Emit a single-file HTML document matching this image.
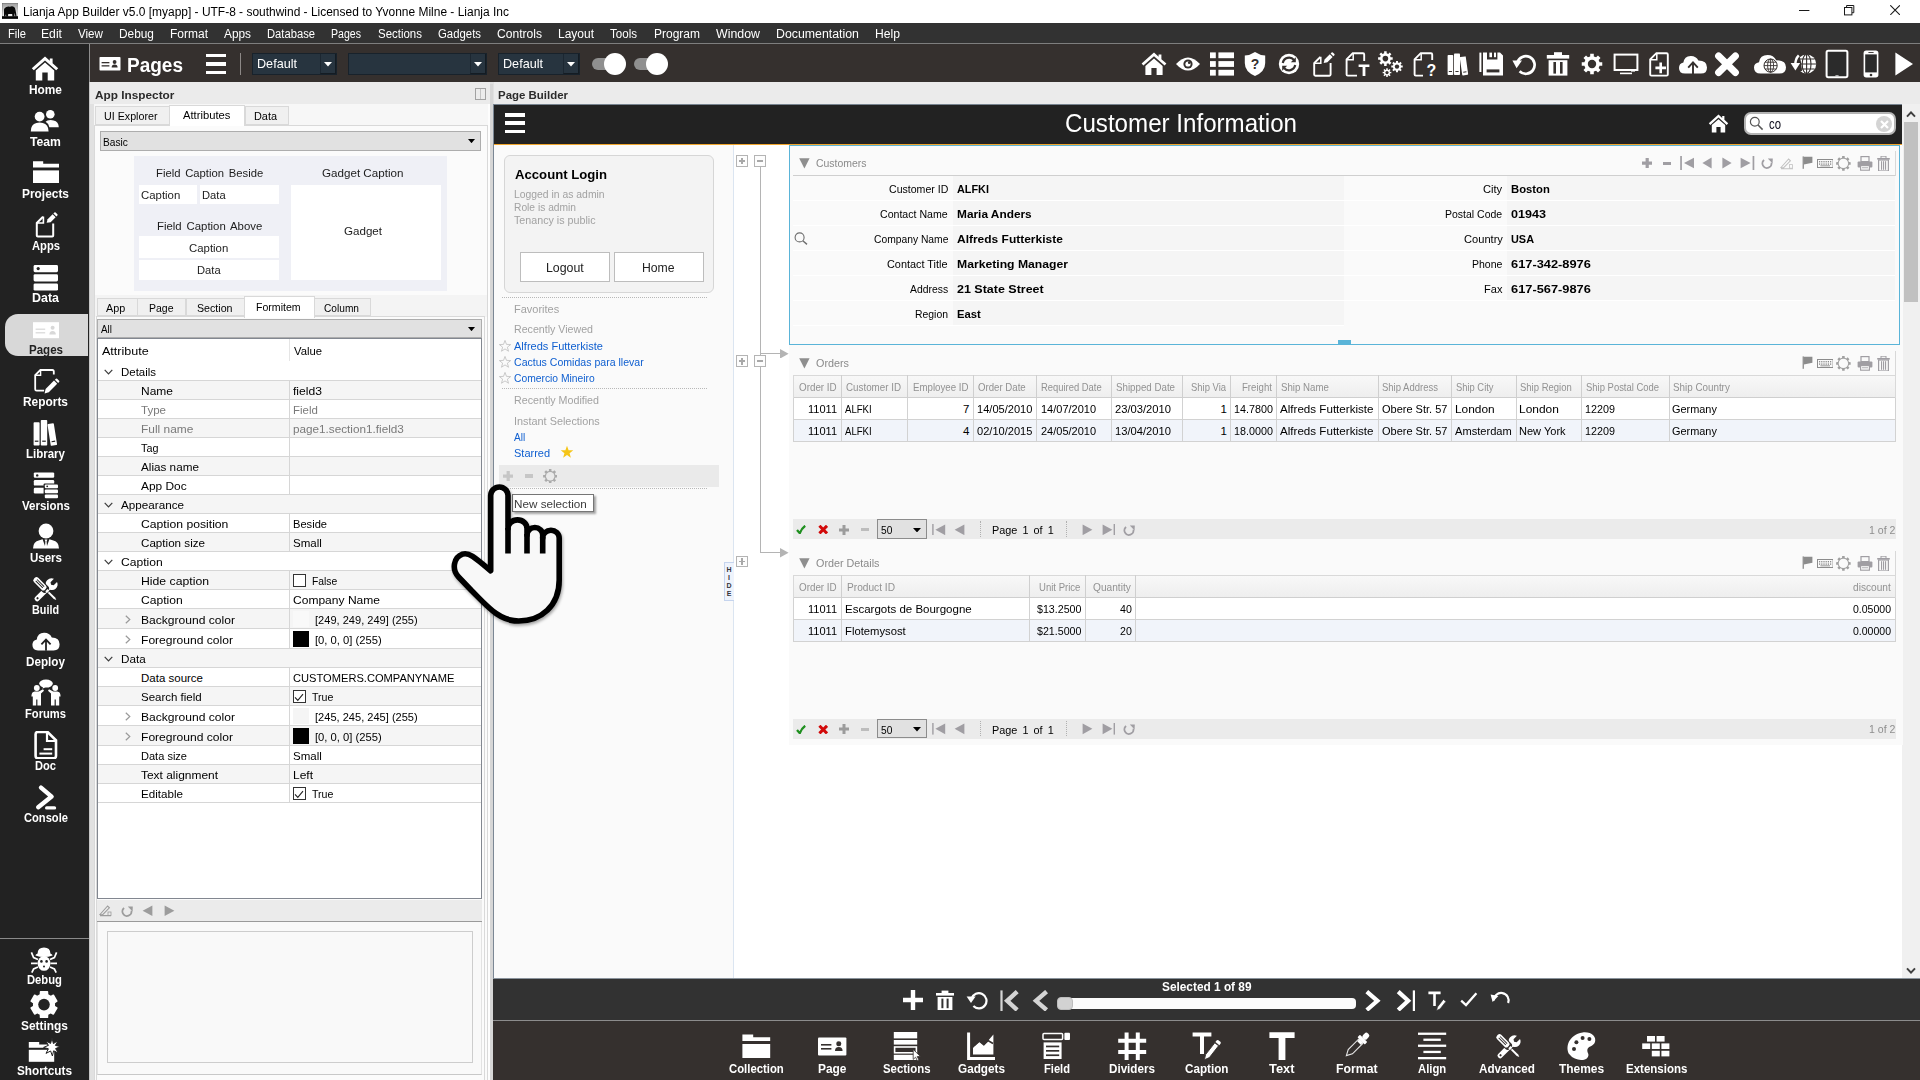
<!DOCTYPE html>
<html><head><meta charset="utf-8"><title>Lianja App Builder</title><style>
html,body{margin:0;padding:0;}
body{width:1920px;height:1080px;overflow:hidden;position:relative;background:#f0f0f0;font-family:"Liberation Sans",sans-serif;}
.t{position:absolute;white-space:nowrap;display:block;transform-origin:0 50%;}
.r{position:absolute;box-sizing:border-box;display:block;}
</style></head><body>
<div class="r" style="left:0px;top:0px;width:1920px;height:23px;background:#ffffff;"></div>
<span class="t" style="left:23.3px;top:3.8px;font-size:12.3px;line-height:16px;transform:scaleX(0.9729);color:#000;">Lianja App Builder v5.0 [myapp] - UTF-8 - southwind - Licensed to Yvonne Milne - Lianja Inc</span>
<div class="r" style="left:0px;top:23px;width:1920px;height:21px;background:#323232;"></div>
<div class="r" style="left:0px;top:43px;width:1920px;height:1.2px;background:#7e7e7e;"></div>
<span class="t" style="left:8.0px;top:26.1px;font-size:12.01px;line-height:16px;transform:scaleX(0.9302);color:#fff;">File</span>
<span class="t" style="left:41.0px;top:26.1px;font-size:12.01px;line-height:16px;transform:scaleX(1.0148);color:#fff;">Edit</span>
<span class="t" style="left:78.0px;top:26.1px;font-size:12.01px;line-height:16px;transform:scaleX(0.9685);color:#fff;">View</span>
<span class="t" style="left:119.0px;top:26.1px;font-size:12.01px;line-height:16px;transform:scaleX(0.9890);color:#fff;">Debug</span>
<span class="t" style="left:170.0px;top:26.1px;font-size:12.01px;line-height:16px;transform:scaleX(0.9992);color:#fff;">Format</span>
<span class="t" style="left:224.0px;top:26.1px;font-size:12.01px;line-height:16px;transform:scaleX(0.9864);color:#fff;">Apps</span>
<span class="t" style="left:267.0px;top:26.1px;font-size:12.01px;line-height:16px;transform:scaleX(0.9337);color:#fff;">Database</span>
<span class="t" style="left:331.0px;top:26.1px;font-size:12.01px;line-height:16px;transform:scaleX(0.8810);color:#fff;">Pages</span>
<span class="t" style="left:378.0px;top:26.1px;font-size:12.01px;line-height:16px;transform:scaleX(0.9552);color:#fff;">Sections</span>
<span class="t" style="left:438.0px;top:26.1px;font-size:12.01px;line-height:16px;transform:scaleX(0.9472);color:#fff;">Gadgets</span>
<span class="t" style="left:497.0px;top:26.1px;font-size:12.01px;line-height:16px;transform:scaleX(1.0063);color:#fff;">Controls</span>
<span class="t" style="left:558.0px;top:26.1px;font-size:12.01px;line-height:16px;transform:scaleX(0.9984);color:#fff;">Layout</span>
<span class="t" style="left:610.0px;top:26.1px;font-size:12.01px;line-height:16px;transform:scaleX(0.9631);color:#fff;">Tools</span>
<span class="t" style="left:654.0px;top:26.1px;font-size:12.01px;line-height:16px;transform:scaleX(0.9989);color:#fff;">Program</span>
<span class="t" style="left:716.0px;top:26.1px;font-size:12.01px;line-height:16px;transform:scaleX(1.0301);color:#fff;">Window</span>
<span class="t" style="left:776.0px;top:26.1px;font-size:12.01px;line-height:16px;transform:scaleX(1.0275);color:#fff;">Documentation</span>
<span class="t" style="left:875.0px;top:26.1px;font-size:12.01px;line-height:16px;transform:scaleX(1.0122);color:#fff;">Help</span>
<div class="r" style="left:0px;top:44px;width:89px;height:1036px;background:#222222;"></div>
<div class="r" style="left:89px;top:82px;width:1px;height:998px;background:#c6c6c6;"></div>
<div class="r" style="left:90px;top:44px;width:1830px;height:38px;background:#35302e;"></div>
<div class="r" style="left:89px;top:44.4px;width:1px;height:37.6px;background:#8e8e8e;"></div>
<div class="r" style="left:90px;top:82px;width:400px;height:998px;background:#f0f0f0;"></div>
<div class="r" style="left:490px;top:82px;width:4px;height:998px;background:#e0e0e0;"></div>
<div class="r" style="left:494px;top:82px;width:1426px;height:998px;background:#f0f0f0;"></div>
<div class="r" style="left:494px;top:104px;width:1408px;height:874px;background:#ffffff;"></div>
<svg class="r" style="left:30px;top:55px;" width="32" height="28" viewBox="0 0 32 28"><path d="M15 1.5 L1.8 13.2 L3.8 15.3 L15 5.4 L26.2 15.3 L28.2 13.2 L22.6 8.2 L22.6 3.6 L19.8 3.6 L19.8 5.8 Z" fill="#fff"/>
<path d="M15 7.6 L5.8 15.6 L5.8 25.4 L12.3 25.4 L12.3 17.6 L17.7 17.6 L17.7 25.4 L24.2 25.4 L24.2 15.6 Z" fill="#fff"/></svg>
<span class="t" style="left:29.0px;top:82.0px;font-size:12.01px;line-height:16px;font-weight:bold;transform:scaleX(0.9890);color:#fff;">Home</span>
<svg class="r" style="left:30px;top:107px;" width="32" height="28" viewBox="0 0 32 28"><circle cx="20.3" cy="7.3" r="4.3" fill="#fff"/><path d="M17.5 13.5 Q20.3 12.6 23.6 13.4 Q28.6 14.6 28.8 20.2 L19.4 20.2 Q18.6 16.4 15.6 14.8 Z" fill="#fff"/>
<circle cx="9.6" cy="9.6" r="4.9" fill="#fff"/><path d="M0.8 24.4 Q0.8 17 6.4 15.9 Q9.6 15.2 12.8 15.9 Q18.4 17 18.6 24.4 Z" fill="#fff"/></svg>
<span class="t" style="left:30.0px;top:134.0px;font-size:12.01px;line-height:16px;font-weight:bold;transform:scaleX(1.0170);color:#fff;">Team</span>
<svg class="r" style="left:30px;top:159px;" width="32" height="28" viewBox="0 0 32 28"><path d="M3 2.2 h10.2 v2.6 h15.8 v3.6 h-26 z" fill="#fff"/><rect x="3" y="11.4" width="26" height="12.6" fill="#fff"/></svg>
<span class="t" style="left:22.0px;top:186.0px;font-size:12.01px;line-height:16px;font-weight:bold;transform:scaleX(0.9917);color:#fff;">Projects</span>
<svg class="r" style="left:30px;top:211px;" width="32" height="28" viewBox="0 0 32 28"><path d="M13 5.8 L6.8 12 L6.8 24.6 Q6.8 25.6 7.8 25.6 L22.2 25.6 Q23.2 25.6 23.2 24.6 L23.2 12.5" fill="none" stroke="#fff" stroke-width="2"/>
<path d="M13.4 5.6 L13.4 12 L7 12" fill="none" stroke="#fff" stroke-width="1.6"/>
<path d="M16.6 11.8 L17.6 8.2 L22.6 3.2 L25.6 6.2 L20.6 11.2 Z" fill="#fff"/><path d="M23.4 2.4 L24.4 1.4 Q25 0.9 25.6 1.4 L27.4 3.2 Q27.9 3.8 27.4 4.4 L26.4 5.4 Z" fill="#fff"/></svg>
<span class="t" style="left:31.5px;top:238.0px;font-size:12.01px;line-height:16px;font-weight:bold;transform:scaleX(0.9326);color:#fff;">Apps</span>
<svg class="r" style="left:30px;top:263px;" width="32" height="28" viewBox="0 0 32 28"><rect x="3.6" y="2" width="24.4" height="7.2" rx="1.4" fill="#fff"/><rect x="3.6" y="11.2" width="24.4" height="7.2" rx="1.4" fill="#fff"/><rect x="3.6" y="20.4" width="24.4" height="7.2" rx="1.4" fill="#fff"/><circle cx="8.2" cy="5.6" r="1.6" fill="#222"/></svg>
<span class="t" style="left:32.0px;top:290.0px;font-size:12.01px;line-height:16px;font-weight:bold;transform:scaleX(1.0373);color:#fff;">Data</span>
<div class="r" style="left:5px;top:314px;width:83px;height:42px;background:#d8d8d8;border-radius:13px 0 0 13px;"></div>
<svg class="r" style="left:30px;top:315px;" width="32" height="28" viewBox="0 0 32 28"><rect x="3" y="7.2" width="26" height="16" fill="#fff"/><rect x="5.6" y="13.6" width="9.6" height="1.2" fill="#d8d8d8"/><rect x="5.6" y="17.2" width="9.6" height="1.2" fill="#d8d8d8"/><circle cx="22.6" cy="12.8" r="2" fill="#d8d8d8"/><path d="M19.4 19.6 q0 -3.6 3.2 -3.6 q3.2 0 3.2 3.6 z" fill="#d8d8d8"/></svg>
<span class="t" style="left:28.5px;top:342.0px;font-size:12.01px;line-height:16px;font-weight:bold;transform:scaleX(0.9609);color:#222;">Pages</span>
<svg class="r" style="left:30px;top:367px;" width="32" height="28" viewBox="0 0 32 28"><path d="M23.8 7.6 L23.8 4.4 Q23.8 3 22.4 3 L10.4 3 L5.2 8.1 L5.2 22.2 Q5.2 23.7 6.7 23.7 L14.1 23.7" fill="none" stroke="#fff" stroke-width="1.8"/>
<path d="M10.6 3 L10.6 8.3 L5.2 8.3" fill="none" stroke="#fff" stroke-width="1.4"/>
<path d="M14.6 26.4 L15.6 22 L24 13.6 L27.2 16.8 L18.8 25.2 Z" fill="#fff"/><path d="M24.9 12.7 L25.9 11.7 Q26.5 11.2 27.1 11.7 L29.1 13.7 Q29.6 14.3 29.1 14.9 L28.1 15.9 Z" fill="#fff"/></svg>
<span class="t" style="left:23.0px;top:394.0px;font-size:12.01px;line-height:16px;font-weight:bold;transform:scaleX(0.9917);color:#fff;">Reports</span>
<svg class="r" style="left:30px;top:419px;" width="32" height="28" viewBox="0 0 32 28"><rect x="3.6" y="3.2" width="6" height="23.4" rx="0.8" fill="#fff"/><rect x="4.8" y="21.6" width="3.6" height="1.2" fill="#222"/>
<rect x="10.8" y="1" width="6.4" height="25.6" rx="0.8" fill="#fff"/><rect x="12.2" y="21.6" width="3.6" height="1.2" fill="#222"/>
<g transform="rotate(-9 22 15)"><rect x="19" y="4.6" width="6.4" height="22" rx="0.8" fill="#fff"/><rect x="20.4" y="22" width="3.6" height="1.2" fill="#222"/></g></svg>
<span class="t" style="left:26.0px;top:446.0px;font-size:12.01px;line-height:16px;font-weight:bold;transform:scaleX(0.9579);color:#fff;">Library</span>
<svg class="r" style="left:30px;top:471px;" width="32" height="28" viewBox="0 0 32 28"><rect x="3.8" y="1.4" width="20.4" height="5.4" rx="1.2" fill="#fff"/><circle cx="7.2" cy="4.4" r="1.2" fill="#222"/>
<rect x="3.8" y="9" width="20.4" height="5.6" rx="1.2" fill="#fff"/><rect x="3.8" y="16.8" width="20.4" height="5.6" rx="1.2" fill="#fff"/>
<rect x="13.6" y="12.4" width="15.4" height="15.4" rx="1.2" fill="#222"/>
<rect x="14.8" y="13.4" width="13.2" height="3.8" rx="1" fill="#fff"/><circle cx="17.2" cy="15.3" r="0.9" fill="#222"/>
<rect x="14.8" y="18.4" width="13.2" height="3.8" rx="1" fill="#fff"/><rect x="14.8" y="23.4" width="13.2" height="3.8" rx="1" fill="#fff"/></svg>
<span class="t" style="left:21.5px;top:498.0px;font-size:12.01px;line-height:16px;font-weight:bold;transform:scaleX(0.9587);color:#fff;">Versions</span>
<svg class="r" style="left:30px;top:523px;" width="32" height="28" viewBox="0 0 32 28"><circle cx="16" cy="8" r="7.4" fill="#fff"/><path d="M3 25.4 Q3 18.8 9.4 17.2 L12.6 16.2 L15 23 L15.4 18.4 L14.6 16.6 L17.4 16.6 L16.6 18.4 L17 23 L19.4 16.2 L22.6 17.2 Q29 18.8 29 25.4 Z" fill="#fff"/></svg>
<span class="t" style="left:29.5px;top:550.0px;font-size:12.01px;line-height:16px;font-weight:bold;transform:scaleX(0.9585);color:#fff;">Users</span>
<svg class="r" style="left:30px;top:575px;" width="32" height="28" viewBox="0 0 32 28"><g transform="translate(0 0.8)"><g transform="rotate(45 16 14)"><path d="M13.8 0.6 L13.8 5.4 L16 6.8 L18.2 5.4 L18.2 0.6 Q22 2 22 6.4 Q22 9.6 18.6 11.2 L18.6 27 Q18.6 29 16 29 Q13.4 29 13.4 27 L13.4 11.2 Q10 9.6 10 6.4 Q10 2 13.8 0.6 Z" fill="#fff"/><circle cx="16" cy="26" r="1.1" fill="#222"/></g>
<g transform="rotate(-45 16 14)"><rect x="12" y="-3" width="8" height="19" rx="3" fill="#222"/><rect x="13" y="-2.4" width="6" height="15.6" rx="2.4" fill="#fff"/><rect x="14.6" y="0.4" width="0.9" height="10" fill="#222"/><rect x="16.5" y="0.4" width="0.9" height="10" fill="#222"/><rect x="14.4" y="14.6" width="3.2" height="2.4" fill="#fff"/><path d="M15 17.6 L17 17.6 L17 26 L16 28.6 L15 26 Z" fill="#fff"/></g></g></svg>
<span class="t" style="left:32.0px;top:602.0px;font-size:12.01px;line-height:16px;font-weight:bold;transform:scaleX(0.8995);color:#fff;">Build</span>
<svg class="r" style="left:30px;top:627px;" width="32" height="28" viewBox="0 0 32 28"><path d="M8 23.4 Q2.4 23.4 2.4 17.8 Q2.4 13.4 6.8 12.4 Q7.6 6.2 14 5.8 Q19.4 5.6 21.8 10.4 Q29.6 10.6 29.6 17.2 Q29.6 23.4 23.6 23.4 Z" fill="#fff"/>
<path d="M16 13.4 L16 23.8 M11.4 17.4 L16 12.6 L20.6 17.4" fill="none" stroke="#222" stroke-width="1.8"/></svg>
<span class="t" style="left:26.0px;top:654.0px;font-size:12.01px;line-height:16px;font-weight:bold;transform:scaleX(0.9741);color:#fff;">Deploy</span>
<svg class="r" style="left:30px;top:679px;" width="32" height="28" viewBox="0 0 32 28"><ellipse cx="16" cy="4.6" rx="6.8" ry="4" fill="#fff"/><path d="M13.6 6.6 L12.4 9.8 L16.4 7.4 Z" fill="#fff"/>
<g transform="translate(-1.6 0)"><circle cx="8.4" cy="9" r="2.9" fill="#fff"/><path d="M3 17.6 Q3 12.8 6.4 12.6 L10.4 12.6 L14.6 10.2 L15.6 11.8 L12.6 14.6 L12.6 26.6 L9 26.6 L9 20.6 L7.8 20.6 L7.8 26.6 L4.4 26.6 L4.4 17.6 Z" fill="#fff"/>
</g><g transform="translate(1.6 0)"><circle cx="23.6" cy="9" r="2.9" fill="#fff"/><path d="M29 17.6 Q29 12.8 25.6 12.6 L21.6 12.6 L17.4 10.2 L16.4 11.8 L19.4 14.6 L19.4 26.6 L23 26.6 L23 20.6 L24.2 20.6 L24.2 26.6 L27.6 26.6 L27.6 17.6 Z" fill="#fff"/></g></svg>
<span class="t" style="left:25.0px;top:706.0px;font-size:12.01px;line-height:16px;font-weight:bold;transform:scaleX(0.9310);color:#fff;">Forums</span>
<svg class="r" style="left:30px;top:731px;" width="32" height="28" viewBox="0 0 32 28"><path d="M5.6 3.2 Q5.6 1 7.8 1 L17.6 1 L26 9.4 L26 25 Q26 27.2 23.8 27.2 L7.8 27.2 Q5.6 27.2 5.6 25 Z" fill="none" stroke="#fff" stroke-width="2.6"/>
<path d="M17 1.4 L17 10 L25.6 10" fill="none" stroke="#fff" stroke-width="2.2"/><rect x="13.6" y="17.2" width="8.6" height="2" fill="#fff"/><rect x="9.4" y="21.6" width="12.8" height="2" fill="#fff"/></svg>
<span class="t" style="left:35.0px;top:758.0px;font-size:12.01px;line-height:16px;font-weight:bold;transform:scaleX(0.9256);color:#fff;">Doc</span>
<svg class="r" style="left:30px;top:783px;" width="32" height="28" viewBox="0 0 32 28"><path d="M11 4.6 L21.6 13.6 L8.2 24.2" fill="none" stroke="#fff" stroke-width="4.4" stroke-linejoin="round" stroke-linecap="round"/><rect x="15" y="23.2" width="11.2" height="3.4" rx="1.7" fill="#fff"/></svg>
<span class="t" style="left:23.5px;top:810.0px;font-size:12.01px;line-height:16px;font-weight:bold;transform:scaleX(0.9288);color:#fff;">Console</span>
<div class="r" style="left:0px;top:938px;width:89px;height:1px;background:#8a8a8a;"></div>
<svg class="r" style="left:28.4px;top:945px;" width="32" height="28" viewBox="0 0 32 28"><path d="M9.6 8.6 Q9.6 2.4 16 2.4 Q22.4 2.4 22.4 8.6 Q24.6 9.4 24.6 10.6 Q16 13.6 7.4 10.6 Q7.4 9.4 9.6 8.6 Z" fill="#fff"/>
<ellipse cx="16" cy="18.4" rx="6.4" ry="7.4" fill="#fff"/><circle cx="13.4" cy="16.4" r="1.3" fill="#222"/><circle cx="18.6" cy="16.4" r="1.3" fill="#222"/><circle cx="16" cy="21.6" r="1" fill="#222"/>
<path d="M10 14.6 L5.6 12.6 L3.4 7.4 M9.6 18.4 L3 18.4 M10 22 L5.6 24 L3.8 27.6 M22 14.6 L26.4 12.6 L28.6 7.4 M22.4 18.4 L29 18.4 M22 22 L26.4 24 L28.2 27.6" fill="none" stroke="#fff" stroke-width="1.7"/></svg>
<span class="t" style="left:27.0px;top:972.0px;font-size:12.01px;line-height:16px;font-weight:bold;transform:scaleX(0.9369);color:#fff;">Debug</span>
<svg class="r" style="left:28.4px;top:990px;" width="32" height="28" viewBox="0 0 32 28"><path d="M28.75 18.02 L25.33 23.93 L22.71 22.54 L19.52 24.39 L19.42 27.35 L12.58 27.35 L12.48 24.39 L9.29 22.54 L6.67 23.93 L3.25 18.02 L5.76 16.44 L5.76 12.76 L3.25 11.18 L6.67 5.27 L9.29 6.66 L12.48 4.81 L12.58 1.85 L19.42 1.85 L19.52 4.81 L22.71 6.66 L25.33 5.27 L28.75 11.18 L26.24 12.76 L26.24 16.44 Z" fill="#fff" stroke="#fff" stroke-width="1.6" stroke-linejoin="round"/><circle cx="16" cy="14.6" r="5.8" fill="#222"/></svg>
<span class="t" style="left:21.0px;top:1018.0px;font-size:12.01px;line-height:16px;font-weight:bold;transform:scaleX(0.9921);color:#fff;">Settings</span>
<svg class="r" style="left:28.4px;top:1037px;" width="32" height="28" viewBox="0 0 32 28"><path d="M0.8 5 h10.4 v2.6 h8.4 v3.2 h-18.8 z" fill="#fff"/><rect x="0.8" y="12.8" width="25.4" height="12" fill="#fff"/>
<path d="M24 1 L25.4 6.6 L30 3.6 L27.4 8.4 L32.4 9.6 L27.6 11.6 L30.4 16 L25.6 13.8 L24.4 19 L22.6 14 L18 16.4 L20.4 11.8 L15.6 10.4 L20.4 8.4 L18 4 L22.6 6.4 Z" fill="#fff" stroke="#222" stroke-width="1"/></svg>
<span class="t" style="left:17.0px;top:1063.0px;font-size:12.01px;line-height:16px;font-weight:bold;transform:scaleX(0.9813);color:#fff;">Shortcuts</span>
<svg class="r" style="left:99px;top:56px;" width="22" height="16" viewBox="0 0 22 16"><rect x="0.5" y="1" width="21" height="13.6" rx="0.8" fill="#fff"/><rect x="2.6" y="6" width="7.8" height="1.3" fill="#35302e"/><rect x="2.6" y="9.2" width="7.8" height="1.3" fill="#35302e"/><circle cx="15.6" cy="6" r="1.9" fill="#35302e"/><path d="M12.6 11.6 q0 -3.2 3 -3.2 q3 0 3 3.2 z" fill="#35302e"/></svg>
<span class="t" style="left:126.5px;top:53.0px;font-size:20px;line-height:24px;font-weight:bold;transform:scaleX(0.9504);color:#fff;">Pages</span>
<div class="r" style="left:206px;top:53.8px;width:20px;height:3.6px;background:#fff;"></div>
<div class="r" style="left:206px;top:62.3px;width:20px;height:3.6px;background:#fff;"></div>
<div class="r" style="left:206px;top:70.8px;width:20px;height:3.6px;background:#fff;"></div>
<div class="r" style="left:240px;top:52.5px;width:1.2px;height:22.5px;background:#8c8886;"></div>
<div class="r" style="left:252px;top:53px;width:85px;height:22px;background:#27343f;border:1.5px solid #18222b;"></div>
<div class="r" style="left:320px;top:54px;width:16px;height:20px;background:#27343f;border-left:1px solid #1c2731;border-bottom:1.5px solid #141c23;border-right:1px solid #141c23;"></div>
<svg class="r" style="left:324px;top:62px;" width="8" height="5" viewBox="0 0 8 5"><path d="M0 0 L8 0 L4 4.6 Z" fill="#fff"/></svg>
<span class="t" style="left:256.5px;top:55.4px;font-size:13px;line-height:17px;transform:scaleX(0.9712);color:#fff;">Default</span>
<div class="r" style="left:348px;top:53px;width:139px;height:22px;background:#27343f;border:1.5px solid #18222b;"></div>
<div class="r" style="left:470px;top:54px;width:16px;height:20px;background:#27343f;border-left:1px solid #1c2731;border-bottom:1.5px solid #141c23;border-right:1px solid #141c23;"></div>
<svg class="r" style="left:474px;top:62px;" width="8" height="5" viewBox="0 0 8 5"><path d="M0 0 L8 0 L4 4.6 Z" fill="#fff"/></svg>
<div class="r" style="left:498px;top:53px;width:82px;height:22px;background:#27343f;border:1.5px solid #18222b;"></div>
<div class="r" style="left:563px;top:54px;width:16px;height:20px;background:#27343f;border-left:1px solid #1c2731;border-bottom:1.5px solid #141c23;border-right:1px solid #141c23;"></div>
<svg class="r" style="left:567px;top:62px;" width="8" height="5" viewBox="0 0 8 5"><path d="M0 0 L8 0 L4 4.6 Z" fill="#fff"/></svg>
<span class="t" style="left:502.5px;top:55.4px;font-size:13px;line-height:17px;transform:scaleX(0.9712);color:#fff;">Default</span>
<div class="r" style="left:592px;top:58px;width:30px;height:12px;background:#8f8f8f;border-radius:6px;"></div>
<div class="r" style="left:604px;top:53px;width:22px;height:22px;background:#fff;border-radius:11px;"></div>
<div class="r" style="left:634px;top:58px;width:30px;height:12px;background:#8f8f8f;border-radius:6px;"></div>
<div class="r" style="left:646px;top:53px;width:22px;height:22px;background:#fff;border-radius:11px;"></div>
<svg class="r" style="left:1140px;top:50px;overflow:visible;" width="28" height="28" viewBox="0 0 28 28"><path d="M14 2.6 L1.6 13.6 L3.4 15.6 L14 6.2 L24.6 15.6 L26.4 13.6 L21.4 9.2 L21.4 4.4 L18.6 4.4 L18.6 6.7 Z" fill="#fff"/><path d="M14 8.4 L5.4 16 L5.4 25 L11.4 25 L11.4 18 L16.6 18 L16.6 25 L22.6 25 L22.6 16 Z" fill="#fff"/></svg>
<svg class="r" style="left:1174px;top:50px;overflow:visible;" width="28" height="28" viewBox="0 0 28 28"><path d="M2 14 Q8 7.4 14 7.4 Q20 7.4 26 14 Q20 20.6 14 20.6 Q8 20.6 2 14 Z" fill="#fff"/><circle cx="14" cy="14" r="4.6" fill="#35302e"/><circle cx="14" cy="14" r="2.6" fill="#fff"/><circle cx="15.2" cy="12.8" r="1.3" fill="#35302e"/></svg>
<svg class="r" style="left:1208px;top:50px;overflow:visible;" width="28" height="28" viewBox="0 0 28 28"><rect x="2" y="2.4" width="5.8" height="5.8" fill="#fff"/><rect x="10.4" y="2.4" width="15.6" height="5.8" fill="#fff"/><rect x="2" y="11.1" width="5.8" height="5.8" fill="#fff"/><rect x="10.4" y="11.1" width="15.6" height="5.8" fill="#fff"/><rect x="2" y="19.8" width="5.8" height="5.8" fill="#fff"/><rect x="10.4" y="19.8" width="15.6" height="5.8" fill="#fff"/></svg>
<svg class="r" style="left:1241px;top:50px;overflow:visible;" width="28" height="28" viewBox="0 0 28 28"><path d="M14 2 Q9 5.4 3.8 5.4 L3.8 13 Q3.8 21.6 14 26 Q24.2 21.6 24.2 13 L24.2 5.4 Q19 5.4 14 2 Z" fill="#fff"/><text x="14" y="19.4" font-family="Liberation Sans" font-weight="bold" font-size="14" text-anchor="middle" fill="#35302e">?</text></svg>
<svg class="r" style="left:1275px;top:50px;overflow:visible;" width="28" height="28" viewBox="0 0 28 28"><circle cx="14" cy="14" r="10.2" fill="#fff"/><path d="M7.8 13 A6.4 6.4 0 0 1 19 10" fill="none" stroke="#35302e" stroke-width="2.2"/><path d="M20.8 7.2 L20.8 12.2 L15.8 12.2 Z" fill="#35302e"/><path d="M20.2 15 A6.4 6.4 0 0 1 9 18" fill="none" stroke="#35302e" stroke-width="2.2"/><path d="M7.2 20.8 L7.2 15.8 L12.2 15.8 Z" fill="#35302e"/></svg>
<svg class="r" style="left:1309px;top:50px;overflow:visible;" width="28" height="28" viewBox="0 0 28 28"><path d="M11.4 7 L5.2 13.2 L5.2 24.6 Q5.2 25.8 6.4 25.8 L20.4 25.8 Q21.6 25.8 21.6 24.6 L21.6 13" fill="none" stroke="#fff" stroke-width="1.9"/><path d="M11.8 6.8 L11.8 13.2 L5.4 13.2" fill="none" stroke="#fff" stroke-width="1.5"/>
<path d="M14.6 13 L15.6 9.4 L20.8 4.2 L23.6 7 L18.4 12.2 Z" fill="#fff"/><path d="M21.6 3.4 L22.6 2.4 Q23.2 1.9 23.8 2.4 L25.4 4 Q25.9 4.6 25.4 5.2 L24.4 6.2 Z" fill="#fff"/></svg>
<svg class="r" style="left:1343px;top:50px;overflow:visible;" width="28" height="28" viewBox="0 0 28 28"><path d="M14 25.6 L4.8 25.6 Q3.6 25.6 3.6 24.4 L3.6 9.4 L9.8 3.2 L20 3.2 Q21.2 3.2 21.2 4.4 L21.2 11" fill="none" stroke="#fff" stroke-width="1.9"/><path d="M10.2 3.4 L10.2 9.8 L3.8 9.8" fill="none" stroke="#fff" stroke-width="1.5"/>
<path d="M15.6 14.4 L26.4 14.4 L26.4 17 L22.4 17 L22.4 26 L19.6 26 L19.6 17 L15.6 17 Z" fill="#fff"/></svg>
<svg class="r" style="left:1376px;top:50px;overflow:visible;" width="28" height="28" viewBox="0 0 28 28"><path d="M16.69 7.33 L16.69 9.87 L14.65 9.86 L14.00 11.42 L15.45 12.86 L13.66 14.65 L12.22 13.20 L10.66 13.85 L10.67 15.89 L8.13 15.89 L8.14 13.85 L6.58 13.20 L5.14 14.65 L3.35 12.86 L4.80 11.42 L4.15 9.86 L2.11 9.87 L2.11 7.33 L4.15 7.34 L4.80 5.78 L3.35 4.34 L5.14 2.55 L6.58 4.00 L8.14 3.35 L8.13 1.31 L10.67 1.31 L10.66 3.35 L12.22 4.00 L13.66 2.55 L15.45 4.34 L14.00 5.78 L14.65 7.34 Z" fill="#fff"/><circle cx="9.4" cy="8.6" r="2.8" fill="#35302e"/><path d="M26.71 15.60 L26.71 17.60 L25.08 17.58 L24.58 18.79 L25.75 19.94 L24.34 21.35 L23.19 20.18 L21.98 20.68 L22.00 22.31 L20.00 22.31 L20.02 20.68 L18.81 20.18 L17.66 21.35 L16.25 19.94 L17.42 18.79 L16.92 17.58 L15.29 17.60 L15.29 15.60 L16.92 15.62 L17.42 14.41 L16.25 13.26 L17.66 11.85 L18.81 13.02 L20.02 12.52 L20.00 10.89 L22.00 10.89 L21.98 12.52 L23.19 13.02 L24.34 11.85 L25.75 13.26 L24.58 14.41 L25.08 15.62 Z" fill="#fff"/><circle cx="21" cy="16.6" r="2.2" fill="#35302e"/><path d="M15.33 21.84 L15.33 23.36 L14.01 23.32 L13.64 24.22 L14.60 25.13 L13.53 26.20 L12.62 25.24 L11.72 25.61 L11.76 26.93 L10.24 26.93 L10.28 25.61 L9.38 25.24 L8.47 26.20 L7.40 25.13 L8.36 24.22 L7.99 23.32 L6.67 23.36 L6.67 21.84 L7.99 21.88 L8.36 20.98 L7.40 20.07 L8.47 19.00 L9.38 19.96 L10.28 19.59 L10.24 18.27 L11.76 18.27 L11.72 19.59 L12.62 19.96 L13.53 19.00 L14.60 20.07 L13.64 20.98 L14.01 21.88 Z" fill="#fff"/><circle cx="11" cy="22.6" r="1.6" fill="#35302e"/></svg>
<svg class="r" style="left:1410px;top:50px;overflow:visible;" width="28" height="28" viewBox="0 0 28 28"><path d="M13 25.6 L5.8 25.6 Q4.6 25.6 4.6 24.4 L4.6 9.4 L10.8 3.2 L21 3.2 Q22.2 3.2 22.2 4.4 L22.2 10" fill="none" stroke="#fff" stroke-width="1.9"/><path d="M11.2 3.4 L11.2 9.8 L4.8 9.8" fill="none" stroke="#fff" stroke-width="1.5"/>
<text x="21.4" y="26" font-family="Liberation Sans" font-weight="bold" font-size="16" text-anchor="middle" fill="#fff">?</text></svg>
<svg class="r" style="left:1443px;top:50px;overflow:visible;" width="28" height="28" viewBox="0 0 28 28"><rect x="4.6" y="5" width="5.6" height="20" rx="0.8" fill="#fff"/><rect x="5.8" y="21" width="3.2" height="1" fill="#35302e"/><rect x="11" y="3.4" width="6" height="21.6" rx="0.8" fill="#fff"/><rect x="12.4" y="21" width="3.2" height="1" fill="#35302e"/><g transform="rotate(-8 21 16)"><rect x="18" y="6.6" width="6" height="18.6" rx="0.8" fill="#fff"/><rect x="19.4" y="21.6" width="3.2" height="1" fill="#35302e"/></g></svg>
<svg class="r" style="left:1477px;top:50px;overflow:visible;" width="28" height="28" viewBox="0 0 28 28"><path d="M2.4 2.6 L4.4 2.6 L4.4 22 L2.4 22 Z" fill="#fff"/><path d="M6 2.6 L10 2.6 L10 9.4 L20.4 9.4 L20.4 2.6 L23 2.6 L26 5.6 L26 25.6 L6 25.6 Z" fill="#fff"/><rect x="12.4" y="2.6" width="2.6" height="4.6" fill="#fff"/><rect x="17" y="2.6" width="2" height="4.6" fill="#fff"/><rect x="9.6" y="19.4" width="12.8" height="3" fill="#35302e"/></svg>
<svg class="r" style="left:1511px;top:50px;overflow:visible;" width="28" height="28" viewBox="0 0 28 28"><path d="M6.4 12.4 A8.8 8.8 0 1 1 8.6 21.2" fill="none" stroke="#fff" stroke-width="2.7"/><path d="M1.4 10.6 L11 10.6 L5.6 18.2 Z" fill="#fff"/></svg>
<svg class="r" style="left:1544px;top:50px;overflow:visible;" width="28" height="28" viewBox="0 0 28 28"><rect x="2.8" y="5" width="22.4" height="3.6" fill="#fff"/><rect x="10" y="2.2" width="8" height="3.4" fill="#fff"/><path d="M4.6 10.2 L23.4 10.2 L23.4 25.6 L4.6 25.6 Z" fill="#fff"/><rect x="9.4" y="12" width="2.6" height="11.6" fill="#35302e"/><rect x="16" y="12" width="2.6" height="11.6" fill="#35302e"/></svg>
<svg class="r" style="left:1578px;top:50px;overflow:visible;" width="28" height="28" viewBox="0 0 28 28"><path d="M24.25 12.21 L24.25 15.79 L21.58 15.82 L20.65 18.08 L22.51 19.98 L19.98 22.51 L18.08 20.65 L15.82 21.58 L15.79 24.25 L12.21 24.25 L12.18 21.58 L9.92 20.65 L8.02 22.51 L5.49 19.98 L7.35 18.08 L6.42 15.82 L3.75 15.79 L3.75 12.21 L6.42 12.18 L7.35 9.92 L5.49 8.02 L8.02 5.49 L9.92 7.35 L12.18 6.42 L12.21 3.75 L15.79 3.75 L15.82 6.42 L18.08 7.35 L19.98 5.49 L22.51 8.02 L20.65 9.92 L21.58 12.18 Z" fill="#fff"/><circle cx="14" cy="14" r="4.2" fill="#35302e"/></svg>
<svg class="r" style="left:1612px;top:50px;overflow:visible;" width="28" height="28" viewBox="0 0 28 28"><rect x="2.6" y="4.6" width="22.8" height="15.4" fill="none" stroke="#fff" stroke-width="2"/><rect x="8" y="22.6" width="12" height="1.6" fill="#fff"/><rect x="19" y="20.6" width="4" height="1" fill="#fff"/></svg>
<svg class="r" style="left:1645px;top:50px;overflow:visible;" width="28" height="28" viewBox="0 0 28 28"><path d="M5.2 24.4 L5.2 9.4 L11.4 3.2 L21.6 3.2 Q22.8 3.2 22.8 4.4 L22.8 24.4 Q22.8 25.6 21.6 25.6 L6.4 25.6 Q5.2 25.6 5.2 24.4 Z" fill="none" stroke="#fff" stroke-width="1.9"/><path d="M11.8 3.4 L11.8 9.8 L5.4 9.8" fill="none" stroke="#fff" stroke-width="1.5"/><path d="M14.4 12.6 L17 12.6 L17 16.6 L21 16.6 L21 19.2 L17 19.2 L17 23.2 L14.4 23.2 L14.4 19.2 L10.4 19.2 L10.4 16.6 L14.4 16.6 Z" fill="#fff"/></svg>
<svg class="r" style="left:1679px;top:50px;overflow:visible;" width="28" height="28" viewBox="0 0 28 28"><path d="M6 23.6 Q0 23.6 0 18 Q0 13.6 4.4 12.6 Q5.2 6.4 11.6 6 Q17 5.8 19.4 10.6 Q28 10.8 28 17.4 Q28 23.6 22 23.6 Z" fill="#fff"/><path d="M14 13 L14 24 M9.2 17.6 L14 12.4 L18.8 17.6" fill="none" stroke="#35302e" stroke-width="1.9"/></svg>
<svg class="r" style="left:1713px;top:50px;overflow:visible;" width="28" height="28" viewBox="0 0 28 28"><path d="M5.6 6 L22.4 22.6 M22.4 6 L5.6 22.6" fill="none" stroke="#fff" stroke-width="7" stroke-linecap="round"/></svg>
<svg class="r" style="left:1756px;top:50px;overflow:visible;" width="28" height="28" viewBox="0 0 28 28"><path d="M4.6 23.6 Q-2 23.6 -2 17.6 Q-2 13 3 12.2 Q4 5 11.6 5 Q17.6 5 20.2 10.2 Q30 10.4 30 17.2 Q30 23.6 23.4 23.6 Z" fill="#fff"/><circle cx="14.6" cy="15.6" r="6.6" fill="#fff" stroke="#35302e" stroke-width="1"/><ellipse cx="14.6" cy="15.6" rx="3" ry="6.6" fill="none" stroke="#35302e" stroke-width="0.9"/><path d="M8 15.6 L21.2 15.6 M14.6 9 L14.6 22.2 M9 12.2 L20.2 12.2 M9 19 L20.2 19" stroke="#35302e" stroke-width="0.9" fill="none"/></svg>
<svg class="r" style="left:1790px;top:50px;overflow:visible;" width="28" height="28" viewBox="0 0 28 28"><circle cx="16.6" cy="14" r="9.6" fill="#fff"/><ellipse cx="16.6" cy="14" rx="4.4" ry="9.6" fill="none" stroke="#35302e" stroke-width="1.1"/><path d="M7 14 L26.2 14 M16.6 4.4 L16.6 23.6 M8.6 9 L24.6 9 M8.6 19 L24.6 19" stroke="#35302e" stroke-width="1.1" fill="none"/><path d="M-1 4 L9 4 L11 12 L12 21 L4 22 L-1 14 Z" fill="#35302e"/><path d="M8.8 5.4 Q5.2 9 5.4 14.6" fill="none" stroke="#fff" stroke-width="2.4"/><path d="M0.6 13 L10.2 13 L5.4 20.6 Z" fill="#fff"/></svg>
<svg class="r" style="left:1823px;top:50px;overflow:visible;" width="28" height="28" viewBox="0 0 28 28"><rect x="3.6" y="0.8" width="20.8" height="26.4" rx="1.6" fill="#2b2b2b" stroke="#fff" stroke-width="2"/><rect x="12.4" y="25.4" width="3.2" height="0.9" fill="#fff"/></svg>
<svg class="r" style="left:1857px;top:50px;overflow:visible;" width="28" height="28" viewBox="0 0 28 28"><rect x="6.6" y="0.6" width="14.8" height="26.8" rx="2.6" fill="#fff"/><rect x="8.2" y="4.4" width="11.6" height="18" fill="#2b2b2b"/><circle cx="14" cy="25" r="1.3" fill="#35302e"/><rect x="11.4" y="2" width="5.2" height="0.9" fill="#35302e"/></svg>
<svg class="r" style="left:1890px;top:50px;overflow:visible;" width="28" height="28" viewBox="0 0 28 28"><path d="M5.4 2.4 L23 14 L5.4 25.6 Z" fill="#fff"/></svg>
<div class="r" style="left:90px;top:82px;width:400px;height:22px;background:#ebebeb;"></div>
<span class="t" style="left:95.3px;top:87.8px;font-size:11.5px;line-height:15px;font-weight:bold;transform:scaleX(1.0271);color:#2b2b2b;">App Inspector</span>
<div class="r" style="left:475px;top:88.2px;width:11px;height:11.5px;background:#ececec;border:1.3px solid #a2a2a2;"></div>
<div class="r" style="left:480px;top:89.4px;width:1.2px;height:9.4px;background:#c4c4c4;"></div>
<div class="r" style="left:90px;top:104px;width:3.6px;height:976px;background:#e1e1e1;"></div>
<div class="r" style="left:93.6px;top:104px;width:394px;height:21px;background:#f7f7f7;"></div>
<div class="r" style="left:93.6px;top:124.8px;width:394.4px;height:955px;background:#fbfbfb;border:1px solid #d9d9d9;border-bottom:none;"></div>
<div class="r" style="left:95.3px;top:106px;width:75.1px;height:18.8px;background:#f0f0f0;border:1px solid #d9d9d9;"></div>
<span class="t" style="left:104.4px;top:109.0px;font-size:11.5px;line-height:15px;transform:scaleX(0.9302);color:#000;">UI Explorer</span>
<div class="r" style="left:244.5px;top:106px;width:44.3px;height:18.8px;background:#f0f0f0;border:1px solid #d9d9d9;"></div>
<span class="t" style="left:254.0px;top:109.0px;font-size:11.5px;line-height:15px;transform:scaleX(0.9469);color:#000;">Data</span>
<div class="r" style="left:169.4px;top:104.5px;width:76.1px;height:21.9px;background:#ffffff;border:1px solid #d9d9d9;border-bottom:none;"></div>
<span class="t" style="left:182.9px;top:108.0px;font-size:11.5px;line-height:15px;transform:scaleX(0.9758);color:#000;">Attributes</span>
<div class="r" style="left:100px;top:131.3px;width:381px;height:19.4px;background:#e1e1e1;border:1px solid #adadad;"></div>
<span class="t" style="left:103.0px;top:134.7px;font-size:11.5px;line-height:15px;transform:scaleX(0.8819);color:#000;">Basic</span>
<svg class="r" style="left:468px;top:139px;" width="7" height="4.4" viewBox="0 0 7 4.4"><path d="M0 0 L7 0 L3.5 4.2 Z" fill="#000"/></svg>
<div class="r" style="left:134px;top:156px;width:313px;height:134.7px;background:#eff0f6;"></div>
<span class="t" style="left:155.7px;top:165.6px;font-size:10.5px;line-height:14px;transform:scaleX(1.0735);color:#1c1c1c;word-spacing:1.5px;">Field Caption Beside</span>
<div class="r" style="left:138.9px;top:185px;width:58.1px;height:19px;background:#fff;"></div>
<span class="t" style="left:141.0px;top:188.0px;font-size:11.5px;line-height:15px;transform:scaleX(0.9915);color:#1c1c1c;">Caption</span>
<div class="r" style="left:200px;top:185px;width:79.2px;height:19px;background:#fff;"></div>
<span class="t" style="left:202.4px;top:188.0px;font-size:11.5px;line-height:15px;transform:scaleX(0.9716);color:#1c1c1c;">Data</span>
<span class="t" style="left:156.7px;top:219.3px;font-size:10.5px;line-height:14px;transform:scaleX(1.0854);color:#1c1c1c;word-spacing:1.5px;">Field Caption Above</span>
<div class="r" style="left:138.9px;top:236px;width:140.3px;height:21.7px;background:#fff;"></div>
<span class="t" style="left:189.2px;top:241.0px;font-size:11.5px;line-height:15px;transform:scaleX(0.9915);color:#1c1c1c;">Caption</span>
<div class="r" style="left:138.9px;top:260px;width:140.3px;height:19.8px;background:#fff;"></div>
<span class="t" style="left:197.4px;top:263.2px;font-size:11.5px;line-height:15px;transform:scaleX(0.9716);color:#1c1c1c;">Data</span>
<span class="t" style="left:322.0px;top:166.4px;font-size:10.5px;line-height:14px;transform:scaleX(1.1068);color:#1c1c1c;">Gadget Caption</span>
<div class="r" style="left:291px;top:185px;width:150px;height:94.8px;background:#fff;"></div>
<span class="t" style="left:344.0px;top:224.1px;font-size:11.5px;line-height:15px;transform:scaleX(1.0074);color:#1c1c1c;">Gadget</span>
<div class="r" style="left:94.6px;top:295px;width:392.4px;height:21.5px;background:#f4f4f4;"></div>
<div class="r" style="left:96px;top:316px;width:388.6px;height:764px;background:#fbfbfb;border:1px solid #d9d9d9;border-bottom:none;"></div>
<div class="r" style="left:97px;top:298px;width:41.4px;height:18px;background:#f0f0f0;border:1px solid #d9d9d9;"></div>
<span class="t" style="left:106.4px;top:301.0px;font-size:11.5px;line-height:15px;transform:scaleX(0.9384);color:#000;">App</span>
<div class="r" style="left:137.4px;top:298px;width:49.1px;height:18px;background:#f0f0f0;border:1px solid #d9d9d9;"></div>
<span class="t" style="left:149.0px;top:301.0px;font-size:11.5px;line-height:15px;transform:scaleX(0.9123);color:#000;">Page</span>
<div class="r" style="left:185.5px;top:298px;width:59px;height:18px;background:#f0f0f0;border:1px solid #d9d9d9;"></div>
<span class="t" style="left:197.0px;top:301.0px;font-size:11.5px;line-height:15px;transform:scaleX(0.9255);color:#000;">Section</span>
<div class="r" style="left:314.3px;top:298px;width:56.4px;height:18px;background:#f0f0f0;border:1px solid #d9d9d9;"></div>
<span class="t" style="left:324.0px;top:301.0px;font-size:11.5px;line-height:15px;transform:scaleX(0.8833);color:#000;">Column</span>
<div class="r" style="left:243.5px;top:296px;width:71.8px;height:21.6px;background:#ffffff;border:1px solid #d9d9d9;border-bottom:none;"></div>
<span class="t" style="left:256.0px;top:300.0px;font-size:11.5px;line-height:15px;transform:scaleX(0.9186);color:#000;">Formitem</span>
<div class="r" style="left:97.2px;top:319px;width:384.6px;height:18.8px;background:#e1e1e1;border:1px solid #adadad;"></div>
<span class="t" style="left:100.8px;top:321.7px;font-size:11.5px;line-height:15px;transform:scaleX(0.8528);color:#000;">All</span>
<svg class="r" style="left:468.3px;top:326.5px;" width="7" height="4.4" viewBox="0 0 7 4.4"><path d="M0 0 L7 0 L3.5 4.2 Z" fill="#000"/></svg>
<div class="r" style="left:97.3px;top:337.6px;width:384.7px;height:561px;background:#ffffff;border:1px solid #828790;"></div>
<span class="t" style="left:102.2px;top:344.0px;font-size:11.5px;line-height:15px;transform:scaleX(1.0905);color:#000;">Attribute</span>
<span class="t" style="left:294.0px;top:344.0px;font-size:11.5px;line-height:15px;transform:scaleX(0.9805);color:#000;">Value</span>
<div class="r" style="left:289px;top:339px;width:1px;height:22px;background:#e5e5e5;"></div>
<div class="r" style="left:98.3px;top:380px;width:382.7px;height:1px;background:#d6d6d6;"></div>
<svg class="r" style="left:103.5px;top:368.5px;" width="9" height="6" viewBox="0 0 9 6"><path d="M0.7 0.8 L4.5 4.8 L8.3 0.8" fill="none" stroke="#3c3c3c" stroke-width="1.2"/></svg>
<span class="t" style="left:121.0px;top:365.1px;font-size:11.5px;line-height:15px;transform:scaleX(0.9957);color:#000;">Details</span>
<div class="r" style="left:98.3px;top:380.5px;width:382.7px;height:19px;background:#f5f5f5;"></div>
<div class="r" style="left:98.3px;top:399px;width:382.7px;height:1px;background:#d6d6d6;"></div>
<div class="r" style="left:289px;top:380.5px;width:1px;height:19px;background:#d6d6d6;"></div>
<span class="t" style="left:141.0px;top:384.1px;font-size:11.5px;line-height:15px;transform:scaleX(1.0400);color:#000;">Name</span>
<span class="t" style="left:293.0px;top:384.1px;font-size:11.5px;line-height:15px;transform:scaleX(1.0513);color:#000;">field3</span>
<div class="r" style="left:98.3px;top:418px;width:382.7px;height:1px;background:#d6d6d6;"></div>
<div class="r" style="left:289px;top:399.5px;width:1px;height:19px;background:#d6d6d6;"></div>
<span class="t" style="left:141.0px;top:403.1px;font-size:11.5px;line-height:15px;transform:scaleX(1.0028);color:#7a7a7a;">Type</span>
<span class="t" style="left:293.0px;top:403.1px;font-size:11.5px;line-height:15px;transform:scaleX(0.9950);color:#7a7a7a;">Field</span>
<div class="r" style="left:98.3px;top:418.5px;width:382.7px;height:19px;background:#f5f5f5;"></div>
<div class="r" style="left:98.3px;top:437px;width:382.7px;height:1px;background:#d6d6d6;"></div>
<div class="r" style="left:289px;top:418.5px;width:1px;height:19px;background:#d6d6d6;"></div>
<span class="t" style="left:141.0px;top:422.1px;font-size:11.5px;line-height:15px;transform:scaleX(1.0359);color:#7a7a7a;">Full name</span>
<span class="t" style="left:293.0px;top:422.1px;font-size:11.5px;line-height:15px;transform:scaleX(1.0195);color:#7a7a7a;">page1.section1.field3</span>
<div class="r" style="left:98.3px;top:456px;width:382.7px;height:1px;background:#d6d6d6;"></div>
<div class="r" style="left:289px;top:437.5px;width:1px;height:19px;background:#d6d6d6;"></div>
<span class="t" style="left:141.0px;top:441.1px;font-size:11.5px;line-height:15px;transform:scaleX(0.9385);color:#000;">Tag</span>
<div class="r" style="left:98.3px;top:456.5px;width:382.7px;height:19px;background:#f5f5f5;"></div>
<div class="r" style="left:98.3px;top:475px;width:382.7px;height:1px;background:#d6d6d6;"></div>
<div class="r" style="left:289px;top:456.5px;width:1px;height:19px;background:#d6d6d6;"></div>
<span class="t" style="left:141.0px;top:460.1px;font-size:11.5px;line-height:15px;transform:scaleX(1.0178);color:#000;">Alias name</span>
<div class="r" style="left:98.3px;top:494px;width:382.7px;height:1px;background:#d6d6d6;"></div>
<div class="r" style="left:289px;top:475.5px;width:1px;height:19px;background:#d6d6d6;"></div>
<span class="t" style="left:141.0px;top:479.1px;font-size:11.5px;line-height:15px;transform:scaleX(1.0361);color:#000;">App Doc</span>
<div class="r" style="left:98.3px;top:494.5px;width:382.7px;height:19px;background:#f5f5f5;"></div>
<div class="r" style="left:98.3px;top:513px;width:382.7px;height:1px;background:#d6d6d6;"></div>
<svg class="r" style="left:103.5px;top:501.5px;" width="9" height="6" viewBox="0 0 9 6"><path d="M0.7 0.8 L4.5 4.8 L8.3 0.8" fill="none" stroke="#3c3c3c" stroke-width="1.2"/></svg>
<span class="t" style="left:121.0px;top:498.1px;font-size:11.5px;line-height:15px;transform:scaleX(1.0159);color:#000;">Appearance</span>
<div class="r" style="left:98.3px;top:532px;width:382.7px;height:1px;background:#d6d6d6;"></div>
<div class="r" style="left:289px;top:513.5px;width:1px;height:19px;background:#d6d6d6;"></div>
<span class="t" style="left:141.0px;top:517.1px;font-size:11.5px;line-height:15px;transform:scaleX(1.0598);color:#000;">Caption position</span>
<span class="t" style="left:293.0px;top:517.1px;font-size:11.5px;line-height:15px;transform:scaleX(0.9670);color:#000;">Beside</span>
<div class="r" style="left:98.3px;top:532.5px;width:382.7px;height:19px;background:#f5f5f5;"></div>
<div class="r" style="left:98.3px;top:551px;width:382.7px;height:1px;background:#d6d6d6;"></div>
<div class="r" style="left:289px;top:532.5px;width:1px;height:19px;background:#d6d6d6;"></div>
<span class="t" style="left:141.0px;top:536.1px;font-size:11.5px;line-height:15px;transform:scaleX(1.0114);color:#000;">Caption size</span>
<span class="t" style="left:293.0px;top:536.1px;font-size:11.5px;line-height:15px;transform:scaleX(1.0016);color:#000;">Small</span>
<div class="r" style="left:98.3px;top:570px;width:382.7px;height:1px;background:#d6d6d6;"></div>
<svg class="r" style="left:103.5px;top:558.5px;" width="9" height="6" viewBox="0 0 9 6"><path d="M0.7 0.8 L4.5 4.8 L8.3 0.8" fill="none" stroke="#3c3c3c" stroke-width="1.2"/></svg>
<span class="t" style="left:121.0px;top:555.1px;font-size:11.5px;line-height:15px;transform:scaleX(1.0521);color:#000;">Caption</span>
<div class="r" style="left:98.3px;top:570.5px;width:382.7px;height:19px;background:#f5f5f5;"></div>
<div class="r" style="left:98.3px;top:589px;width:382.7px;height:1px;background:#d6d6d6;"></div>
<div class="r" style="left:289px;top:570.5px;width:1px;height:19px;background:#d6d6d6;"></div>
<span class="t" style="left:141.0px;top:574.1px;font-size:11.5px;line-height:15px;transform:scaleX(1.0637);color:#000;">Hide caption</span>
<div class="r" style="left:292.7px;top:574.2px;width:13.3px;height:13.3px;background:#fff;border:1px solid #333;"></div>
<span class="t" style="left:312.4px;top:574.1px;font-size:11.5px;line-height:15px;transform:scaleX(0.8997);color:#000;">False</span>
<div class="r" style="left:98.3px;top:608px;width:382.7px;height:1px;background:#d6d6d6;"></div>
<div class="r" style="left:289px;top:589.5px;width:1px;height:19px;background:#d6d6d6;"></div>
<span class="t" style="left:141.0px;top:593.1px;font-size:11.5px;line-height:15px;transform:scaleX(1.0521);color:#000;">Caption</span>
<span class="t" style="left:293.0px;top:593.1px;font-size:11.5px;line-height:15px;transform:scaleX(1.0471);color:#000;">Company Name</span>
<div class="r" style="left:98.3px;top:608.5px;width:382.7px;height:20px;background:#f5f5f5;"></div>
<div class="r" style="left:98.3px;top:628px;width:382.7px;height:1px;background:#d6d6d6;"></div>
<div class="r" style="left:289px;top:608.5px;width:1px;height:20px;background:#d6d6d6;"></div>
<svg class="r" style="left:125px;top:615.1px;" width="6" height="9" viewBox="0 0 6 9"><path d="M0.8 0.7 L4.8 4.5 L0.8 8.3" fill="none" stroke="#9a9a9a" stroke-width="1.2"/></svg>
<span class="t" style="left:141.0px;top:612.6px;font-size:11.5px;line-height:15px;transform:scaleX(1.0504);color:#000;">Background color</span>
<div class="r" style="left:292.7px;top:610.6px;width:16.3px;height:16px;background:#f9f9f9;"></div>
<span class="t" style="left:315.0px;top:612.6px;font-size:11.5px;line-height:15px;transform:scaleX(0.9619);color:#000;">[249, 249, 249] (255)</span>
<div class="r" style="left:98.3px;top:648px;width:382.7px;height:1px;background:#d6d6d6;"></div>
<div class="r" style="left:289px;top:628.5px;width:1px;height:20px;background:#d6d6d6;"></div>
<svg class="r" style="left:125px;top:635.1px;" width="6" height="9" viewBox="0 0 6 9"><path d="M0.8 0.7 L4.8 4.5 L0.8 8.3" fill="none" stroke="#9a9a9a" stroke-width="1.2"/></svg>
<span class="t" style="left:141.0px;top:632.6px;font-size:11.5px;line-height:15px;transform:scaleX(1.0506);color:#000;">Foreground color</span>
<div class="r" style="left:292.7px;top:630.6px;width:16.3px;height:16px;background:#000000;"></div>
<span class="t" style="left:315.0px;top:632.6px;font-size:11.5px;line-height:15px;transform:scaleX(0.9753);color:#000;">[0, 0, 0] (255)</span>
<div class="r" style="left:98.3px;top:648.5px;width:382.7px;height:19px;background:#f5f5f5;"></div>
<div class="r" style="left:98.3px;top:667px;width:382.7px;height:1px;background:#d6d6d6;"></div>
<svg class="r" style="left:103.5px;top:655.5px;" width="9" height="6" viewBox="0 0 9 6"><path d="M0.7 0.8 L4.5 4.8 L8.3 0.8" fill="none" stroke="#3c3c3c" stroke-width="1.2"/></svg>
<span class="t" style="left:121.0px;top:652.1px;font-size:11.5px;line-height:15px;transform:scaleX(1.0169);color:#000;">Data</span>
<div class="r" style="left:98.3px;top:686px;width:382.7px;height:1px;background:#d6d6d6;"></div>
<div class="r" style="left:289px;top:667.5px;width:1px;height:19px;background:#d6d6d6;"></div>
<span class="t" style="left:141.0px;top:671.1px;font-size:11.5px;line-height:15px;transform:scaleX(1.0000);color:#000;">Data source</span>
<span class="t" style="left:293.0px;top:671.1px;font-size:11.5px;line-height:15px;transform:scaleX(0.9666);color:#000;">CUSTOMERS.COMPANYNAME</span>
<div class="r" style="left:98.3px;top:686.5px;width:382.7px;height:19px;background:#f5f5f5;"></div>
<div class="r" style="left:98.3px;top:705px;width:382.7px;height:1px;background:#d6d6d6;"></div>
<div class="r" style="left:289px;top:686.5px;width:1px;height:19px;background:#d6d6d6;"></div>
<span class="t" style="left:141.0px;top:690.1px;font-size:11.5px;line-height:15px;transform:scaleX(0.9996);color:#000;">Search field</span>
<div class="r" style="left:292.7px;top:690.2px;width:13.3px;height:13.3px;background:#fff;border:1px solid #333;"></div>
<svg class="r" style="left:294.4px;top:692.5px;" width="10" height="9" viewBox="0 0 10 9"><path d="M1 4.4 L3.8 7.4 L9 1.2" fill="none" stroke="#222" stroke-width="1.1"/></svg>
<span class="t" style="left:312.4px;top:690.1px;font-size:11.5px;line-height:15px;transform:scaleX(0.9217);color:#000;">True</span>
<div class="r" style="left:98.3px;top:725px;width:382.7px;height:1px;background:#d6d6d6;"></div>
<div class="r" style="left:289px;top:705.5px;width:1px;height:20px;background:#d6d6d6;"></div>
<svg class="r" style="left:125px;top:712.1px;" width="6" height="9" viewBox="0 0 6 9"><path d="M0.8 0.7 L4.8 4.5 L0.8 8.3" fill="none" stroke="#9a9a9a" stroke-width="1.2"/></svg>
<span class="t" style="left:141.0px;top:709.6px;font-size:11.5px;line-height:15px;transform:scaleX(1.0504);color:#000;">Background color</span>
<div class="r" style="left:292.7px;top:707.6px;width:16.3px;height:16px;background:#f5f5f5;"></div>
<span class="t" style="left:315.0px;top:709.6px;font-size:11.5px;line-height:15px;transform:scaleX(0.9619);color:#000;">[245, 245, 245] (255)</span>
<div class="r" style="left:98.3px;top:725.5px;width:382.7px;height:20px;background:#f5f5f5;"></div>
<div class="r" style="left:98.3px;top:745px;width:382.7px;height:1px;background:#d6d6d6;"></div>
<div class="r" style="left:289px;top:725.5px;width:1px;height:20px;background:#d6d6d6;"></div>
<svg class="r" style="left:125px;top:732.1px;" width="6" height="9" viewBox="0 0 6 9"><path d="M0.8 0.7 L4.8 4.5 L0.8 8.3" fill="none" stroke="#9a9a9a" stroke-width="1.2"/></svg>
<span class="t" style="left:141.0px;top:729.6px;font-size:11.5px;line-height:15px;transform:scaleX(1.0506);color:#000;">Foreground color</span>
<div class="r" style="left:292.7px;top:727.6px;width:16.3px;height:16px;background:#000000;"></div>
<span class="t" style="left:315.0px;top:729.6px;font-size:11.5px;line-height:15px;transform:scaleX(0.9753);color:#000;">[0, 0, 0] (255)</span>
<div class="r" style="left:98.3px;top:764px;width:382.7px;height:1px;background:#d6d6d6;"></div>
<div class="r" style="left:289px;top:745.5px;width:1px;height:19px;background:#d6d6d6;"></div>
<span class="t" style="left:141.0px;top:749.1px;font-size:11.5px;line-height:15px;transform:scaleX(0.9596);color:#000;">Data size</span>
<span class="t" style="left:293.0px;top:749.1px;font-size:11.5px;line-height:15px;transform:scaleX(1.0016);color:#000;">Small</span>
<div class="r" style="left:98.3px;top:764.5px;width:382.7px;height:19px;background:#f5f5f5;"></div>
<div class="r" style="left:98.3px;top:783px;width:382.7px;height:1px;background:#d6d6d6;"></div>
<div class="r" style="left:289px;top:764.5px;width:1px;height:19px;background:#d6d6d6;"></div>
<span class="t" style="left:141.0px;top:768.1px;font-size:11.5px;line-height:15px;transform:scaleX(1.0385);color:#000;">Text alignment</span>
<span class="t" style="left:293.0px;top:768.1px;font-size:11.5px;line-height:15px;transform:scaleX(1.0428);color:#000;">Left</span>
<div class="r" style="left:98.3px;top:802px;width:382.7px;height:1px;background:#d6d6d6;"></div>
<div class="r" style="left:289px;top:783.5px;width:1px;height:19px;background:#d6d6d6;"></div>
<span class="t" style="left:141.0px;top:787.1px;font-size:11.5px;line-height:15px;transform:scaleX(1.0107);color:#000;">Editable</span>
<div class="r" style="left:292.7px;top:787.2px;width:13.3px;height:13.3px;background:#fff;border:1px solid #333;"></div>
<svg class="r" style="left:294.4px;top:789.5px;" width="10" height="9" viewBox="0 0 10 9"><path d="M1 4.4 L3.8 7.4 L9 1.2" fill="none" stroke="#222" stroke-width="1.1"/></svg>
<span class="t" style="left:312.4px;top:787.1px;font-size:11.5px;line-height:15px;transform:scaleX(0.9217);color:#000;">True</span>
<div class="r" style="left:97.3px;top:900px;width:385px;height:21px;background:#ebebeb;"></div>
<svg class="r" style="left:99px;top:903.5px;" width="13" height="13" viewBox="0 0 13 13"><path d="M1 10.5 L8.6 2 L10.4 3.8 L3.4 10.8 Z M1 11.6 L12 11.6" fill="none" stroke="#9c9c9c" stroke-width="1.1"/><rect x="9" y="8" width="3" height="3.4" fill="none" stroke="#9c9c9c" stroke-width="0.8"/></svg>
<svg class="r" style="left:121px;top:904.5px;" width="12.4" height="12" viewBox="0 0 12.4 12"><path d="M3.1 3.0 A4.5 4.5 0 1 0 10.4 5.6" fill="none" stroke="#9c9c9c" stroke-width="1.7"/><path d="M6.8 1.6 L11.8 1.4 L11.6 6.6 Z" fill="#9c9c9c"/></svg>
<svg class="r" style="left:142.4px;top:904.6px;" width="11" height="11.4" viewBox="0 0 11 11.4"><path d="M10.4 0.4 L10.4 11 L0.6 5.7 Z" fill="#9c9c9c"/></svg>
<svg class="r" style="left:163.6px;top:904.6px;" width="11" height="11.4" viewBox="0 0 11 11.4"><path d="M0.6 0.4 L0.6 11 L10.4 5.7 Z" fill="#9c9c9c"/></svg>
<div class="r" style="left:97.3px;top:921px;width:384.7px;height:1px;background:#9a9a9a;"></div>
<div class="r" style="left:97.3px;top:922px;width:385px;height:153px;background:#f9f9f9;border-left:1px solid #e2e2e2;border-right:1px solid #e2e2e2;border-bottom:1px solid #c8c8c8;"></div>
<div class="r" style="left:106.5px;top:931px;width:366.5px;height:132px;background:#f9f9f9;border:1px solid #cdcdcd;"></div>
<div class="r" style="left:488.2px;top:104px;width:2.3px;height:976px;background:#fdfdfd;"></div>
<div class="r" style="left:490.4px;top:84px;width:2.9px;height:996px;background:#d6d6d6;"></div>
<div class="r" style="left:494px;top:82px;width:1426px;height:22px;background:#ebebeb;"></div>
<span class="t" style="left:498.0px;top:87.8px;font-size:11.5px;line-height:15px;font-weight:bold;transform:scaleX(0.9958);color:#2b2b2b;">Page Builder</span>
<div class="r" style="left:494px;top:104.5px;width:1408px;height:39px;background:#222222;"></div>
<div class="r" style="left:494px;top:104px;width:1408px;height:1px;background:#77838f;"></div>
<div class="r" style="left:494px;top:143.6px;width:1408px;height:1.3px;background:#f0a52c;"></div>
<div class="r" style="left:504.7px;top:113px;width:20.4px;height:3.8px;background:#fff;"></div>
<div class="r" style="left:504.7px;top:121.3px;width:20.4px;height:3.8px;background:#fff;"></div>
<div class="r" style="left:504.7px;top:129.6px;width:20.4px;height:3.8px;background:#fff;"></div>
<span class="t" style="left:1064.5px;top:109.4px;font-size:25.5px;line-height:29px;transform:scaleX(0.9463);color:#fff;">Customer Information</span>
<svg class="r" style="left:1708px;top:113px;" width="21" height="21" viewBox="0 0 21 21"><path d="M10.5 1.6 L0.8 10.2 L2.3 11.9 L10.5 4.6 L18.7 11.9 L20.2 10.2 L16.4 6.8 L16.4 3 L14.2 3 L14.2 4.9 Z" fill="#fff"/><path d="M10.5 6.2 L3.8 12.1 L3.8 19.6 L8.4 19.6 L8.4 14 L12.6 14 L12.6 19.6 L17.2 19.6 L17.2 12.1 Z" fill="#fff"/></svg>
<div class="r" style="left:1744px;top:112px;width:152px;height:23px;background:#ffffff;border:2px solid #b4b4b4;border-radius:7px;"></div>
<svg class="r" style="left:1749px;top:116px;" width="15" height="15" viewBox="0 0 15 15"><circle cx="5.8" cy="5.8" r="4.4" fill="none" stroke="#555" stroke-width="1.2"/><path d="M9 9 L13.6 13.6" stroke="#555" stroke-width="1.5"/></svg>
<span class="t" style="left:1768.5px;top:114.5px;font-size:14px;line-height:18px;transform:scaleX(0.8116);color:#0a0a1a;">co</span>
<div class="r" style="left:1875.5px;top:115.5px;width:16.5px;height:16.5px;background:#d4d4d4;border-radius:9px;"></div>
<svg class="r" style="left:1879.5px;top:119.5px;" width="9" height="9" viewBox="0 0 9 9"><path d="M1 1 L8 8 M8 1 L1 8" stroke="#fff" stroke-width="2.2"/></svg>
<div class="r" style="left:1902.6px;top:104.5px;width:17.4px;height:874px;background:#f0f0f0;"></div>
<div class="r" style="left:1904px;top:121.5px;width:14px;height:180px;background:#c1c1c1;"></div>
<svg class="r" style="left:1906px;top:111px;" width="10" height="7" viewBox="0 0 10 7"><path d="M1 5.6 L5 1.4 L9 5.6" fill="none" stroke="#404040" stroke-width="2"/></svg>
<svg class="r" style="left:1906px;top:967.2px;" width="10" height="7" viewBox="0 0 10 7"><path d="M1 1.4 L5 5.6 L9 1.4" fill="none" stroke="#404040" stroke-width="2"/></svg>
<div class="r" style="left:493.2px;top:104px;width:1px;height:875.5px;background:#7b8794;"></div>
<div class="r" style="left:493.2px;top:978.4px;width:1426.8px;height:0.9px;background:#8a939c;"></div>
<div class="r" style="left:494px;top:145px;width:239.5px;height:833px;background:#fafafa;"></div>
<div class="r" style="left:733.2px;top:145px;width:1px;height:833px;background:#dbe5f1;"></div>
<div class="r" style="left:504.2px;top:155px;width:210px;height:137.6px;background:#f3f3f3;border:1px solid #d6d6d6;border-radius:6px;"></div>
<span class="t" style="left:515.0px;top:166.2px;font-size:13.5px;line-height:17px;font-weight:bold;transform:scaleX(0.9738);color:#000;">Account Login</span>
<span class="t" style="left:514.4px;top:187.4px;font-size:11.5px;line-height:15px;transform:scaleX(0.9027);color:#a2a2a2;">Logged in as admin</span>
<span class="t" style="left:514.4px;top:200.4px;font-size:11.5px;line-height:15px;transform:scaleX(0.8900);color:#a2a2a2;">Role is admin</span>
<span class="t" style="left:514.4px;top:213.4px;font-size:11.5px;line-height:15px;transform:scaleX(0.9307);color:#a2a2a2;">Tenancy is public</span>
<div class="r" style="left:520px;top:252.2px;width:90px;height:29.7px;background:#fff;border:1px solid #bdbdbd;"></div>
<span class="t" style="left:546.4px;top:258.7px;font-size:13px;line-height:17px;transform:scaleX(0.9508);color:#222;">Logout</span>
<div class="r" style="left:614px;top:252.2px;width:90px;height:29.7px;background:#fff;border:1px solid #bdbdbd;"></div>
<span class="t" style="left:642.0px;top:258.7px;font-size:13px;line-height:17px;transform:scaleX(0.9401);color:#222;">Home</span>
<div class="r" style="left:502px;top:297px;width:205px;height:1px;border-top:1px dotted #b8b8b8;"></div>
<span class="t" style="left:514.2px;top:302.2px;font-size:11.5px;line-height:15px;transform:scaleX(0.9558);color:#a2a2a2;">Favorites</span>
<span class="t" style="left:514.2px;top:322.4px;font-size:11.5px;line-height:15px;transform:scaleX(0.9246);color:#a2a2a2;">Recently Viewed</span>
<svg class="r" style="left:498px;top:338.5px;" width="14" height="14" viewBox="0 0 14 14"><path d="M7.00 1.40 L8.47 5.38 L12.71 5.55 L9.38 8.17 L10.53 12.25 L7.00 9.90 L3.47 12.25 L4.62 8.17 L1.29 5.55 L5.53 5.38 Z" fill="none" stroke="#c4c4c4" stroke-width="0.9"/></svg>
<span class="t" style="left:514.3px;top:339.0px;font-size:11.5px;line-height:15px;transform:scaleX(0.9594);color:#0f5fd0;">Alfreds Futterkiste</span>
<svg class="r" style="left:498px;top:354.9px;" width="14" height="14" viewBox="0 0 14 14"><path d="M7.00 1.40 L8.47 5.38 L12.71 5.55 L9.38 8.17 L10.53 12.25 L7.00 9.90 L3.47 12.25 L4.62 8.17 L1.29 5.55 L5.53 5.38 Z" fill="none" stroke="#c4c4c4" stroke-width="0.9"/></svg>
<span class="t" style="left:514.3px;top:355.4px;font-size:11.5px;line-height:15px;transform:scaleX(0.9183);color:#0f5fd0;">Cactus Comidas para llevar</span>
<svg class="r" style="left:498px;top:370.5px;" width="14" height="14" viewBox="0 0 14 14"><path d="M7.00 1.40 L8.47 5.38 L12.71 5.55 L9.38 8.17 L10.53 12.25 L7.00 9.90 L3.47 12.25 L4.62 8.17 L1.29 5.55 L5.53 5.38 Z" fill="none" stroke="#c4c4c4" stroke-width="0.9"/></svg>
<span class="t" style="left:514.3px;top:371.0px;font-size:11.5px;line-height:15px;transform:scaleX(0.8956);color:#0f5fd0;">Comercio Mineiro</span>
<div class="r" style="left:502px;top:388px;width:205px;height:1px;border-top:1px dotted #b8b8b8;"></div>
<span class="t" style="left:514.2px;top:393.0px;font-size:11.5px;line-height:15px;transform:scaleX(0.9300);color:#a2a2a2;">Recently Modified</span>
<span class="t" style="left:514.2px;top:413.7px;font-size:11.5px;line-height:15px;transform:scaleX(0.9452);color:#a2a2a2;">Instant Selections</span>
<span class="t" style="left:514.3px;top:430.0px;font-size:11.5px;line-height:15px;transform:scaleX(0.8763);color:#0f5fd0;">All</span>
<span class="t" style="left:514.3px;top:446.0px;font-size:11.5px;line-height:15px;transform:scaleX(0.9573);color:#0f5fd0;">Starred</span>
<svg class="r" style="left:560px;top:445px;" width="14" height="14" viewBox="0 0 14 14"><path d="M7.00 0.80 L8.59 5.22 L13.28 5.36 L9.57 8.23 L10.88 12.74 L7.00 10.10 L3.12 12.74 L4.43 8.23 L0.72 5.36 L5.41 5.22 Z" fill="#f5c518"/></svg>
<div class="r" style="left:498.7px;top:465px;width:220.3px;height:22px;background:#eaeaea;"></div>
<svg class="r" style="left:503px;top:470.8px;" width="10.4" height="10.4" viewBox="0 0 10.4 10.4"><path d="M3.6 0 H6.8 V3.6 H10.4 V6.8 H6.8 V10.4 H3.6 V6.8 H0 V3.6 H3.6 Z" fill="#c6c6c6"/></svg>
<div class="r" style="left:524.9px;top:474.4px;width:8.2px;height:3.2px;background:#c6c6c6;"></div>
<svg class="r" style="left:543px;top:468.8px;" width="14.4" height="14.4" viewBox="0 0 14.4 14.4"><path d="M14.29 5.96 L14.29 8.44 L12.45 8.46 L11.80 10.02 L13.09 11.34 L11.34 13.09 L10.02 11.80 L8.46 12.45 L8.44 14.29 L5.96 14.29 L5.94 12.45 L4.38 11.80 L3.06 13.09 L1.31 11.34 L2.60 10.02 L1.95 8.46 L0.11 8.44 L0.11 5.96 L1.95 5.94 L2.60 4.38 L1.31 3.06 L3.06 1.31 L4.38 2.60 L5.94 1.95 L5.96 0.11 L8.44 0.11 L8.46 1.95 L10.02 2.60 L11.34 1.31 L13.09 3.06 L11.80 4.38 L12.45 5.94 Z" fill="#aaaaaa"/><circle stroke="#aaaaaa" stroke-width="0" cx="7.2" cy="7.2" r="4.2" fill="#eaeaea"/></svg>
<div class="r" style="left:502px;top:488px;width:205px;height:1px;border-top:1px dotted #b8b8b8;"></div>
<div class="r" style="left:511.5px;top:494.4px;width:82px;height:17.9px;background:#ffffff;border:1px solid #767676;box-shadow:2px 2px 2px rgba(0,0,0,0.35);"></div>
<span class="t" style="left:513.8px;top:497.0px;font-size:11.5px;line-height:15px;transform:scaleX(1.0170);color:#3c3c3c;">New selection</span>
<div class="r" style="left:759.6px;top:166px;width:1.1px;height:387px;background:#b4b4b4;"></div>
<div class="r" style="left:759.6px;top:352.7px;width:22px;height:1.1px;background:#b4b4b4;"></div>
<div class="r" style="left:759.6px;top:552.2px;width:22px;height:1.1px;background:#b4b4b4;"></div>
<svg class="r" style="left:780px;top:348.5px;" width="9" height="9.6" viewBox="0 0 9 9.6"><path d="M0 0 L8.6 4.8 L0 9.6 Z" fill="#b4b4b4"/></svg>
<svg class="r" style="left:780px;top:548px;" width="9" height="9.6" viewBox="0 0 9 9.6"><path d="M0 0 L8.6 4.8 L0 9.6 Z" fill="#b4b4b4"/></svg>
<div class="r" style="left:736.2px;top:155.2px;width:11.6px;height:11.6px;background:#fdfdfd;border:1.3px solid #b4b4b4;"></div>
<div class="r" style="left:738.6px;top:160.1px;width:6.8px;height:1.8px;background:#a8a8a8;"></div>
<div class="r" style="left:741.1px;top:157.6px;width:1.8px;height:6.8px;background:#a8a8a8;"></div>
<div class="r" style="left:754.2px;top:155.2px;width:11.6px;height:11.6px;background:#fdfdfd;border:1.3px solid #b4b4b4;"></div>
<div class="r" style="left:756.6px;top:160.1px;width:6.8px;height:1.8px;background:#a8a8a8;"></div>
<div class="r" style="left:736.2px;top:355.4px;width:11.6px;height:11.6px;background:#fdfdfd;border:1.3px solid #b4b4b4;"></div>
<div class="r" style="left:738.6px;top:360.3px;width:6.8px;height:1.8px;background:#a8a8a8;"></div>
<div class="r" style="left:741.1px;top:357.8px;width:1.8px;height:6.8px;background:#a8a8a8;"></div>
<div class="r" style="left:754.2px;top:355.4px;width:11.6px;height:11.6px;background:#fdfdfd;border:1.3px solid #b4b4b4;"></div>
<div class="r" style="left:756.6px;top:360.3px;width:6.8px;height:1.8px;background:#a8a8a8;"></div>
<div class="r" style="left:736.2px;top:555.6px;width:11.6px;height:11.6px;background:#fdfdfd;border:1.3px solid #b4b4b4;"></div>
<div class="r" style="left:738.6px;top:560.5px;width:6.8px;height:1.8px;background:#a8a8a8;"></div>
<div class="r" style="left:741.1px;top:558px;width:1.8px;height:6.8px;background:#a8a8a8;"></div>
<div class="r" style="left:724.3px;top:562.3px;width:9.4px;height:38.6px;background:#eef3fc;border:1px solid #c5d4ee;border-right:none;"></div>
<span class="t" style="left:726.5px;top:564.3px;font-size:7px;line-height:11px;font-weight:bold;color:#34343c;">H</span>
<span class="t" style="left:728.0px;top:572.3px;font-size:7px;line-height:11px;font-weight:bold;color:#34343c;">I</span>
<span class="t" style="left:726.5px;top:580.3px;font-size:7px;line-height:11px;font-weight:bold;color:#34343c;">D</span>
<span class="t" style="left:726.7px;top:588.3px;font-size:7px;line-height:11px;font-weight:bold;color:#34343c;">E</span>
<div class="r" style="left:789.3px;top:145.5px;width:1113.3px;height:599px;background:#fafafa;"></div>
<svg class="r" style="left:799px;top:158px;" width="11" height="10.8" viewBox="0 0 11 10.8"><path d="M0.2 0.2 L10.6 0.2 L5.4 10.6 Z" fill="#8e8e8e"/></svg>
<span class="t" style="left:816.0px;top:156.3px;font-size:11.5px;line-height:15px;transform:scaleX(0.9084);color:#8a8a8a;">Customers</span>
<svg class="r" style="left:1641.6px;top:158.1px;" width="10.4" height="10.4" viewBox="0 0 10.4 10.4"><path d="M3.6 0 H6.8 V3.6 H10.4 V6.8 H6.8 V10.4 H3.6 V6.8 H0 V3.6 H3.6 Z" fill="#a09ea3"/></svg>
<div class="r" style="left:1663px;top:161.8px;width:8px;height:3px;background:#a09ea3;"></div>
<svg class="r" style="left:1679.6px;top:156.3px;" width="14.6" height="14" viewBox="0 0 14.6 14"><rect x="0.2" y="0" width="1.7" height="14" fill="#a09ea3"/><path d="M14 1.8 L14 12.2 L4 7 Z" fill="#a09ea3"/></svg>
<svg class="r" style="left:1701.6px;top:157.3px;" width="10" height="12" viewBox="0 0 10 12"><path d="M9.6 0.6 L9.6 11.4 L0.4 6 Z" fill="#a09ea3"/></svg>
<svg class="r" style="left:1721.7px;top:157.3px;" width="10" height="12" viewBox="0 0 10 12"><path d="M0.4 0.6 L0.4 11.4 L9.6 6 Z" fill="#a09ea3"/></svg>
<svg class="r" style="left:1740px;top:156.3px;" width="14.6" height="14" viewBox="0 0 14.6 14"><path d="M0.6 1.8 L0.6 12.2 L10.6 7 Z" fill="#a09ea3"/><rect x="12.6" y="0" width="1.7" height="14" fill="#a09ea3"/></svg>
<svg class="r" style="left:1761.4px;top:157.3px;" width="12.4" height="12" viewBox="0 0 12.4 12"><path d="M3.1 3.0 A4.5 4.5 0 1 0 10.4 5.6" fill="none" stroke="#a09ea3" stroke-width="1.7"/><path d="M6.8 1.6 L11.8 1.4 L11.6 6.6 Z" fill="#a09ea3"/></svg>
<svg class="r" style="left:1780px;top:156.8px;" width="14" height="13" viewBox="0 0 14 13"><path d="M1 10.5 L8.6 2 L10.4 3.8 L3.4 10.8 Z M1 11.8 L13 11.8" fill="none" stroke="#c2c2c2" stroke-width="1.1"/><rect x="9.4" y="7.6" width="3.2" height="3.6" fill="none" stroke="#c2c2c2" stroke-width="0.8"/></svg>
<svg class="r" style="left:1801.5px;top:156.3px;" width="11" height="13" viewBox="0 0 11 13"><rect x="0.6" y="0.4" width="1.3" height="12.4" fill="#8c8c8c"/><path d="M1.8 0.8 L10.4 0.8 L10.4 6.8 L1.8 8.4 Z" fill="#8c8c8c"/></svg>
<svg class="r" style="left:1816.6px;top:159.3px;" width="16.6" height="9" viewBox="0 0 16.6 9"><rect x="0.5" y="0.5" width="15.6" height="8" fill="none" stroke="#8c8c8c" stroke-width="1"/><rect x="2" y="2" width="1.2" height="1.4" fill="#8c8c8c"/><rect x="4.2" y="2" width="1.2" height="1.4" fill="#8c8c8c"/><rect x="6.4" y="2" width="1.2" height="1.4" fill="#8c8c8c"/><rect x="8.6" y="2" width="1.2" height="1.4" fill="#8c8c8c"/><rect x="10.8" y="2" width="1.2" height="1.4" fill="#8c8c8c"/><rect x="13" y="2" width="1.2" height="1.4" fill="#8c8c8c"/><rect x="2" y="4.4" width="1.2" height="1.4" fill="#8c8c8c"/><rect x="4.2" y="4.4" width="1.2" height="1.4" fill="#8c8c8c"/><rect x="6.4" y="4.4" width="1.2" height="1.4" fill="#8c8c8c"/><rect x="8.6" y="4.4" width="1.2" height="1.4" fill="#8c8c8c"/><rect x="10.8" y="4.4" width="1.2" height="1.4" fill="#8c8c8c"/><rect x="13" y="4.4" width="1.2" height="1.4" fill="#8c8c8c"/><rect x="3.4" y="6.4" width="9.6" height="0.9" fill="#8c8c8c"/></svg>
<svg class="r" style="left:1836px;top:155.9px;" width="14.8" height="14.8" viewBox="0 0 14.8 14.8"><path d="M14.69 6.13 L14.69 8.67 L12.94 8.73 L12.26 10.38 L13.45 11.66 L11.66 13.45 L10.38 12.26 L8.73 12.94 L8.67 14.69 L6.13 14.69 L6.07 12.94 L4.42 12.26 L3.14 13.45 L1.35 11.66 L2.54 10.38 L1.86 8.73 L0.11 8.67 L0.11 6.13 L1.86 6.07 L2.54 4.42 L1.35 3.14 L3.14 1.35 L4.42 2.54 L6.07 1.86 L6.13 0.11 L8.67 0.11 L8.73 1.86 L10.38 2.54 L11.66 1.35 L13.45 3.14 L12.26 4.42 L12.94 6.07 Z" fill="#a0a0a0"/><circle cx="7.4" cy="7.4" r="4.7" fill="#fafafa"/></svg>
<svg class="r" style="left:1856.6px;top:156.3px;" width="16" height="15" viewBox="0 0 16 15"><rect x="4" y="0.6" width="8" height="5" fill="none" stroke="#a09ea3" stroke-width="1.2"/><rect x="0.6" y="5.4" width="14.8" height="6" rx="1" fill="#a09ea3"/><rect x="3.6" y="9.6" width="8.8" height="4.6" fill="#fafafa" stroke="#a09ea3" stroke-width="1.1"/><rect x="5" y="11.4" width="6" height="0.8" fill="#a09ea3"/></svg>
<svg class="r" style="left:1877px;top:155.7px;" width="13" height="15.4" viewBox="0 0 13 15.4"><rect x="0.2" y="2" width="12.6" height="1.6" fill="#a09ea3"/><rect x="4" y="0.2" width="5" height="2.2" fill="none" stroke="#a09ea3" stroke-width="1"/><rect x="1.6" y="4" width="9.8" height="11" fill="none" stroke="#a09ea3" stroke-width="1.2"/><rect x="4" y="5.2" width="1.1" height="8.6" fill="#a09ea3"/><rect x="6" y="5.2" width="1.1" height="8.6" fill="#a09ea3"/><rect x="8" y="5.2" width="1.1" height="8.6" fill="#a09ea3"/></svg>
<div class="r" style="left:1895px;top:150.5px;width:1px;height:25px;background:#d8d8d8;"></div>
<div class="r" style="left:793.2px;top:175.2px;width:1102px;height:1px;background:#cfcfcf;"></div>
<div class="r" style="left:953.2px;top:176.2px;width:391.1px;height:24px;background:#f5f5f5;"></div>
<div class="r" style="left:793.2px;top:200.2px;width:551.1px;height:0.9px;background:#ffffff;"></div>
<span class="t" style="left:888.6px;top:182.0px;font-size:11.5px;line-height:15px;transform:scaleX(0.9188);color:#000;">Customer ID</span>
<span class="t" style="left:957.2px;top:182.0px;font-size:11.5px;line-height:15px;font-weight:bold;transform:scaleX(0.9423);color:#000;">ALFKI</span>
<div class="r" style="left:1506.7px;top:176.2px;width:388px;height:24px;background:#f5f5f5;"></div>
<div class="r" style="left:1344.3px;top:200.2px;width:551px;height:0.9px;background:#ffffff;"></div>
<span class="t" style="left:1483.2px;top:182.0px;font-size:11.5px;line-height:15px;transform:scaleX(0.9694);color:#000;">City</span>
<span class="t" style="left:1511.0px;top:182.0px;font-size:11.5px;line-height:15px;font-weight:bold;transform:scaleX(0.9798);color:#000;">Boston</span>
<div class="r" style="left:953.2px;top:201.07px;width:391.1px;height:24px;background:#f5f5f5;"></div>
<div class="r" style="left:793.2px;top:225.07px;width:551.1px;height:0.9px;background:#ffffff;"></div>
<span class="t" style="left:880.3px;top:207.0px;font-size:11.5px;line-height:15px;transform:scaleX(0.9197);color:#000;">Contact Name</span>
<span class="t" style="left:957.2px;top:207.0px;font-size:11.5px;line-height:15px;font-weight:bold;transform:scaleX(1.0314);color:#000;">Maria Anders</span>
<div class="r" style="left:1506.7px;top:201.07px;width:388px;height:24px;background:#f5f5f5;"></div>
<div class="r" style="left:1344.3px;top:225.07px;width:551px;height:0.9px;background:#ffffff;"></div>
<span class="t" style="left:1445.2px;top:207.0px;font-size:11.5px;line-height:15px;transform:scaleX(0.9131);color:#000;">Postal Code</span>
<span class="t" style="left:1511.0px;top:207.0px;font-size:11.5px;line-height:15px;font-weight:bold;transform:scaleX(1.0946);color:#000;">01943</span>
<div class="r" style="left:953.2px;top:225.94px;width:391.1px;height:24px;background:#f5f5f5;"></div>
<div class="r" style="left:793.2px;top:249.94px;width:551.1px;height:0.9px;background:#ffffff;"></div>
<span class="t" style="left:873.5px;top:232.0px;font-size:11.5px;line-height:15px;transform:scaleX(0.8955);color:#000;">Company Name</span>
<span class="t" style="left:957.2px;top:232.0px;font-size:11.5px;line-height:15px;font-weight:bold;transform:scaleX(1.0413);color:#000;">Alfreds Futterkiste</span>
<div class="r" style="left:1506.7px;top:225.94px;width:388px;height:24px;background:#f5f5f5;"></div>
<div class="r" style="left:1344.3px;top:249.94px;width:551px;height:0.9px;background:#ffffff;"></div>
<span class="t" style="left:1463.5px;top:232.0px;font-size:11.5px;line-height:15px;transform:scaleX(0.9661);color:#000;">Country</span>
<span class="t" style="left:1511.0px;top:232.0px;font-size:11.5px;line-height:15px;font-weight:bold;transform:scaleX(0.9472);color:#000;">USA</span>
<div class="r" style="left:953.2px;top:250.81px;width:391.1px;height:24px;background:#f5f5f5;"></div>
<div class="r" style="left:793.2px;top:274.81px;width:551.1px;height:0.9px;background:#ffffff;"></div>
<span class="t" style="left:887.4px;top:257.0px;font-size:11.5px;line-height:15px;transform:scaleX(0.9466);color:#000;">Contact Title</span>
<span class="t" style="left:957.2px;top:257.0px;font-size:11.5px;line-height:15px;font-weight:bold;transform:scaleX(1.0592);color:#000;">Marketing Manager</span>
<div class="r" style="left:1506.7px;top:250.81px;width:388px;height:24px;background:#f5f5f5;"></div>
<div class="r" style="left:1344.3px;top:274.81px;width:551px;height:0.9px;background:#ffffff;"></div>
<span class="t" style="left:1472.0px;top:257.0px;font-size:11.5px;line-height:15px;transform:scaleX(0.9143);color:#000;">Phone</span>
<span class="t" style="left:1511.0px;top:257.0px;font-size:11.5px;line-height:15px;font-weight:bold;transform:scaleX(1.1144);color:#000;">617-342-8976</span>
<div class="r" style="left:953.2px;top:275.68px;width:391.1px;height:24px;background:#f5f5f5;"></div>
<div class="r" style="left:793.2px;top:299.68px;width:551.1px;height:0.9px;background:#ffffff;"></div>
<span class="t" style="left:909.8px;top:282.0px;font-size:11.5px;line-height:15px;transform:scaleX(0.9032);color:#000;">Address</span>
<span class="t" style="left:957.2px;top:282.0px;font-size:11.5px;line-height:15px;font-weight:bold;transform:scaleX(1.0852);color:#000;">21 State Street</span>
<div class="r" style="left:1506.7px;top:275.68px;width:388px;height:24px;background:#f5f5f5;"></div>
<div class="r" style="left:1344.3px;top:299.68px;width:551px;height:0.9px;background:#ffffff;"></div>
<span class="t" style="left:1484.0px;top:282.0px;font-size:11.5px;line-height:15px;transform:scaleX(0.9599);color:#000;">Fax</span>
<span class="t" style="left:1511.0px;top:282.0px;font-size:11.5px;line-height:15px;font-weight:bold;transform:scaleX(1.1144);color:#000;">617-567-9876</span>
<div class="r" style="left:953.2px;top:300.55px;width:391.1px;height:24px;background:#f5f5f5;"></div>
<div class="r" style="left:793.2px;top:324.55px;width:551.1px;height:0.9px;background:#ffffff;"></div>
<span class="t" style="left:914.9px;top:307.0px;font-size:11.5px;line-height:15px;transform:scaleX(0.9056);color:#000;">Region</span>
<span class="t" style="left:957.2px;top:307.0px;font-size:11.5px;line-height:15px;font-weight:bold;transform:scaleX(0.9798);color:#000;">East</span>
<svg class="r" style="left:794px;top:232px;" width="14" height="13" viewBox="0 0 14 13"><circle cx="5.6" cy="5.4" r="4.5" fill="none" stroke="#6e6e6e" stroke-width="1.1"/><path d="M8.8 8.8 L13 12.4" stroke="#6e6e6e" stroke-width="1.4"/></svg>
<div class="r" style="left:1338px;top:340px;width:12.7px;height:4.5px;background:#5ab4d8;"></div>
<div class="r" style="left:788.8px;top:145.4px;width:1111.4px;height:199.6px;border:1.3px solid #5ab4d8;"></div>
<svg class="r" style="left:799px;top:358px;" width="11" height="10.8" viewBox="0 0 11 10.8"><path d="M0.2 0.2 L10.6 0.2 L5.4 10.6 Z" fill="#8e8e8e"/></svg>
<span class="t" style="left:816.0px;top:356.3px;font-size:11.5px;line-height:15px;transform:scaleX(0.9390);color:#8a8a8a;">Orders</span>
<svg class="r" style="left:1801.5px;top:356.3px;" width="11" height="13" viewBox="0 0 11 13"><rect x="0.6" y="0.4" width="1.3" height="12.4" fill="#8c8c8c"/><path d="M1.8 0.8 L10.4 0.8 L10.4 6.8 L1.8 8.4 Z" fill="#8c8c8c"/></svg>
<svg class="r" style="left:1816.6px;top:359.3px;" width="16.6" height="9" viewBox="0 0 16.6 9"><rect x="0.5" y="0.5" width="15.6" height="8" fill="none" stroke="#8c8c8c" stroke-width="1"/><rect x="2" y="2" width="1.2" height="1.4" fill="#8c8c8c"/><rect x="4.2" y="2" width="1.2" height="1.4" fill="#8c8c8c"/><rect x="6.4" y="2" width="1.2" height="1.4" fill="#8c8c8c"/><rect x="8.6" y="2" width="1.2" height="1.4" fill="#8c8c8c"/><rect x="10.8" y="2" width="1.2" height="1.4" fill="#8c8c8c"/><rect x="13" y="2" width="1.2" height="1.4" fill="#8c8c8c"/><rect x="2" y="4.4" width="1.2" height="1.4" fill="#8c8c8c"/><rect x="4.2" y="4.4" width="1.2" height="1.4" fill="#8c8c8c"/><rect x="6.4" y="4.4" width="1.2" height="1.4" fill="#8c8c8c"/><rect x="8.6" y="4.4" width="1.2" height="1.4" fill="#8c8c8c"/><rect x="10.8" y="4.4" width="1.2" height="1.4" fill="#8c8c8c"/><rect x="13" y="4.4" width="1.2" height="1.4" fill="#8c8c8c"/><rect x="3.4" y="6.4" width="9.6" height="0.9" fill="#8c8c8c"/></svg>
<svg class="r" style="left:1836px;top:355.9px;" width="14.8" height="14.8" viewBox="0 0 14.8 14.8"><path d="M14.69 6.13 L14.69 8.67 L12.94 8.73 L12.26 10.38 L13.45 11.66 L11.66 13.45 L10.38 12.26 L8.73 12.94 L8.67 14.69 L6.13 14.69 L6.07 12.94 L4.42 12.26 L3.14 13.45 L1.35 11.66 L2.54 10.38 L1.86 8.73 L0.11 8.67 L0.11 6.13 L1.86 6.07 L2.54 4.42 L1.35 3.14 L3.14 1.35 L4.42 2.54 L6.07 1.86 L6.13 0.11 L8.67 0.11 L8.73 1.86 L10.38 2.54 L11.66 1.35 L13.45 3.14 L12.26 4.42 L12.94 6.07 Z" fill="#a0a0a0"/><circle cx="7.4" cy="7.4" r="4.7" fill="#fafafa"/></svg>
<svg class="r" style="left:1856.6px;top:356.3px;" width="16" height="15" viewBox="0 0 16 15"><rect x="4" y="0.6" width="8" height="5" fill="none" stroke="#a09ea3" stroke-width="1.2"/><rect x="0.6" y="5.4" width="14.8" height="6" rx="1" fill="#a09ea3"/><rect x="3.6" y="9.6" width="8.8" height="4.6" fill="#fafafa" stroke="#a09ea3" stroke-width="1.1"/><rect x="5" y="11.4" width="6" height="0.8" fill="#a09ea3"/></svg>
<svg class="r" style="left:1877px;top:355.7px;" width="13" height="15.4" viewBox="0 0 13 15.4"><rect x="0.2" y="2" width="12.6" height="1.6" fill="#a09ea3"/><rect x="4" y="0.2" width="5" height="2.2" fill="none" stroke="#a09ea3" stroke-width="1"/><rect x="1.6" y="4" width="9.8" height="11" fill="none" stroke="#a09ea3" stroke-width="1.2"/><rect x="4" y="5.2" width="1.1" height="8.6" fill="#a09ea3"/><rect x="6" y="5.2" width="1.1" height="8.6" fill="#a09ea3"/><rect x="8" y="5.2" width="1.1" height="8.6" fill="#a09ea3"/></svg>
<div class="r" style="left:1895px;top:350.5px;width:1px;height:25px;background:#d8d8d8;"></div>
<div class="r" style="left:793.3px;top:375.3px;width:1102.1px;height:22.3px;background:linear-gradient(#f8f8f8,#eeeeee);border-top:1px solid #d9d9d9;border-bottom:1px solid #cfcfcf;"></div>
<span class="t" style="left:799.0px;top:380.2px;font-size:11px;line-height:15px;transform:scaleX(0.8940);color:#929292;">Order ID</span>
<div class="r" style="left:841px;top:375.3px;width:1px;height:22.3px;background:#cfcfcf;"></div>
<span class="t" style="left:846.0px;top:380.2px;font-size:11px;line-height:15px;transform:scaleX(0.8909);color:#929292;">Customer ID</span>
<div class="r" style="left:907.3px;top:375.3px;width:1px;height:22.3px;background:#cfcfcf;"></div>
<span class="t" style="left:913.3px;top:380.2px;font-size:11px;line-height:15px;transform:scaleX(0.8798);color:#929292;">Employee ID</span>
<div class="r" style="left:973.3px;top:375.3px;width:1px;height:22.3px;background:#cfcfcf;"></div>
<span class="t" style="left:978.3px;top:380.2px;font-size:11px;line-height:15px;transform:scaleX(0.8768);color:#929292;">Order Date</span>
<div class="r" style="left:1036px;top:375.3px;width:1px;height:22.3px;background:#cfcfcf;"></div>
<span class="t" style="left:1041.3px;top:380.2px;font-size:11px;line-height:15px;transform:scaleX(0.8558);color:#929292;">Required Date</span>
<div class="r" style="left:1111px;top:375.3px;width:1px;height:22.3px;background:#cfcfcf;"></div>
<span class="t" style="left:1116.2px;top:380.2px;font-size:11px;line-height:15px;transform:scaleX(0.8851);color:#929292;">Shipped Date</span>
<div class="r" style="left:1182.4px;top:375.3px;width:1px;height:22.3px;background:#cfcfcf;"></div>
<span class="t" style="left:1191.0px;top:380.2px;font-size:11px;line-height:15px;transform:scaleX(0.8585);color:#929292;">Ship Via</span>
<div class="r" style="left:1230.3px;top:375.3px;width:1px;height:22.3px;background:#cfcfcf;"></div>
<span class="t" style="left:1242.2px;top:380.2px;font-size:11px;line-height:15px;transform:scaleX(0.8734);color:#929292;">Freight</span>
<div class="r" style="left:1276.4px;top:375.3px;width:1px;height:22.3px;background:#cfcfcf;"></div>
<span class="t" style="left:1281.1px;top:380.2px;font-size:11px;line-height:15px;transform:scaleX(0.8803);color:#929292;">Ship Name</span>
<div class="r" style="left:1377.7px;top:375.3px;width:1px;height:22.3px;background:#cfcfcf;"></div>
<span class="t" style="left:1382.4px;top:380.2px;font-size:11px;line-height:15px;transform:scaleX(0.8624);color:#929292;">Ship Address</span>
<div class="r" style="left:1451.1px;top:375.3px;width:1px;height:22.3px;background:#cfcfcf;"></div>
<span class="t" style="left:1456.3px;top:380.2px;font-size:11px;line-height:15px;transform:scaleX(0.8520);color:#929292;">Ship City</span>
<div class="r" style="left:1515.6px;top:375.3px;width:1px;height:22.3px;background:#cfcfcf;"></div>
<span class="t" style="left:1520.3px;top:380.2px;font-size:11px;line-height:15px;transform:scaleX(0.8627);color:#929292;">Ship Region</span>
<div class="r" style="left:1581.4px;top:375.3px;width:1px;height:22.3px;background:#cfcfcf;"></div>
<span class="t" style="left:1586.1px;top:380.2px;font-size:11px;line-height:15px;transform:scaleX(0.8601);color:#929292;">Ship Postal Code</span>
<div class="r" style="left:1668.6px;top:375.3px;width:1px;height:22.3px;background:#cfcfcf;"></div>
<span class="t" style="left:1673.3px;top:380.2px;font-size:11px;line-height:15px;transform:scaleX(0.8933);color:#929292;">Ship Country</span>
<div class="r" style="left:793.3px;top:375.3px;width:1px;height:22.3px;background:#d9d9d9;"></div>
<div class="r" style="left:1895.4px;top:375.3px;width:1px;height:22.3px;background:#d9d9d9;"></div>
<div class="r" style="left:793.3px;top:397.6px;width:1103.1px;height:22px;background:#ffffff;border:1px solid #d2d2d2;border-top:none;"></div>
<div class="r" style="left:841px;top:397.6px;width:1px;height:21.6px;background:#d2d2d2;"></div>
<div class="r" style="left:907.3px;top:397.6px;width:1px;height:21.6px;background:#d2d2d2;"></div>
<div class="r" style="left:973.3px;top:397.6px;width:1px;height:21.6px;background:#d2d2d2;"></div>
<div class="r" style="left:1036px;top:397.6px;width:1px;height:21.6px;background:#d2d2d2;"></div>
<div class="r" style="left:1111px;top:397.6px;width:1px;height:21.6px;background:#d2d2d2;"></div>
<div class="r" style="left:1182.4px;top:397.6px;width:1px;height:21.6px;background:#d2d2d2;"></div>
<div class="r" style="left:1230.3px;top:397.6px;width:1px;height:21.6px;background:#d2d2d2;"></div>
<div class="r" style="left:1276.4px;top:397.6px;width:1px;height:21.6px;background:#d2d2d2;"></div>
<div class="r" style="left:1377.7px;top:397.6px;width:1px;height:21.6px;background:#d2d2d2;"></div>
<div class="r" style="left:1451.1px;top:397.6px;width:1px;height:21.6px;background:#d2d2d2;"></div>
<div class="r" style="left:1515.6px;top:397.6px;width:1px;height:21.6px;background:#d2d2d2;"></div>
<div class="r" style="left:1581.4px;top:397.6px;width:1px;height:21.6px;background:#d2d2d2;"></div>
<div class="r" style="left:1668.6px;top:397.6px;width:1px;height:21.6px;background:#d2d2d2;"></div>
<span class="t" style="left:808.3px;top:402.0px;font-size:11.5px;line-height:15px;transform:scaleX(0.9581);color:#000;">11011</span>
<span class="t" style="left:845.0px;top:402.0px;font-size:11.5px;line-height:15px;transform:scaleX(0.8355);color:#000;">ALFKI</span>
<span class="t" style="left:963.0px;top:402.0px;font-size:11.5px;line-height:15px;color:#000;">7</span>
<span class="t" style="left:977.3px;top:402.0px;font-size:11.5px;line-height:15px;transform:scaleX(0.9626);color:#000;">14/05/2010</span>
<span class="t" style="left:1040.7px;top:402.0px;font-size:11.5px;line-height:15px;transform:scaleX(0.9557);color:#000;">14/07/2010</span>
<span class="t" style="left:1115.0px;top:402.0px;font-size:11.5px;line-height:15px;transform:scaleX(0.9731);color:#000;">23/03/2010</span>
<span class="t" style="left:1220.6px;top:402.0px;font-size:11.5px;line-height:15px;color:#000;">1</span>
<span class="t" style="left:1234.1px;top:402.0px;font-size:11.5px;line-height:15px;transform:scaleX(0.9359);color:#000;">14.7800</span>
<span class="t" style="left:1280.3px;top:402.0px;font-size:11.5px;line-height:15px;transform:scaleX(1.0090);color:#000;">Alfreds Futterkiste</span>
<span class="t" style="left:1381.5px;top:402.0px;font-size:11.5px;line-height:15px;transform:scaleX(0.9562);color:#000;">Obere Str. 57</span>
<span class="t" style="left:1455.0px;top:402.0px;font-size:11.5px;line-height:15px;transform:scaleX(1.0346);color:#000;">London</span>
<span class="t" style="left:1519.0px;top:402.0px;font-size:11.5px;line-height:15px;transform:scaleX(1.0373);color:#000;">London</span>
<span class="t" style="left:1585.3px;top:402.0px;font-size:11.5px;line-height:15px;transform:scaleX(0.9351);color:#000;">12209</span>
<span class="t" style="left:1672.4px;top:402.0px;font-size:11.5px;line-height:15px;transform:scaleX(0.9495);color:#000;">Germany</span>
<div class="r" style="left:793.3px;top:419.6px;width:1103.1px;height:22px;background:#f1f4fa;border:1px solid #d2d2d2;border-top:none;"></div>
<div class="r" style="left:841px;top:419.6px;width:1px;height:21.6px;background:#d2d2d2;"></div>
<div class="r" style="left:907.3px;top:419.6px;width:1px;height:21.6px;background:#d2d2d2;"></div>
<div class="r" style="left:973.3px;top:419.6px;width:1px;height:21.6px;background:#d2d2d2;"></div>
<div class="r" style="left:1036px;top:419.6px;width:1px;height:21.6px;background:#d2d2d2;"></div>
<div class="r" style="left:1111px;top:419.6px;width:1px;height:21.6px;background:#d2d2d2;"></div>
<div class="r" style="left:1182.4px;top:419.6px;width:1px;height:21.6px;background:#d2d2d2;"></div>
<div class="r" style="left:1230.3px;top:419.6px;width:1px;height:21.6px;background:#d2d2d2;"></div>
<div class="r" style="left:1276.4px;top:419.6px;width:1px;height:21.6px;background:#d2d2d2;"></div>
<div class="r" style="left:1377.7px;top:419.6px;width:1px;height:21.6px;background:#d2d2d2;"></div>
<div class="r" style="left:1451.1px;top:419.6px;width:1px;height:21.6px;background:#d2d2d2;"></div>
<div class="r" style="left:1515.6px;top:419.6px;width:1px;height:21.6px;background:#d2d2d2;"></div>
<div class="r" style="left:1581.4px;top:419.6px;width:1px;height:21.6px;background:#d2d2d2;"></div>
<div class="r" style="left:1668.6px;top:419.6px;width:1px;height:21.6px;background:#d2d2d2;"></div>
<span class="t" style="left:808.3px;top:424.0px;font-size:11.5px;line-height:15px;transform:scaleX(0.9581);color:#000;">11011</span>
<span class="t" style="left:845.0px;top:424.0px;font-size:11.5px;line-height:15px;transform:scaleX(0.8355);color:#000;">ALFKI</span>
<span class="t" style="left:963.0px;top:424.0px;font-size:11.5px;line-height:15px;color:#000;">4</span>
<span class="t" style="left:977.3px;top:424.0px;font-size:11.5px;line-height:15px;transform:scaleX(0.9626);color:#000;">02/10/2015</span>
<span class="t" style="left:1040.7px;top:424.0px;font-size:11.5px;line-height:15px;transform:scaleX(0.9557);color:#000;">24/05/2010</span>
<span class="t" style="left:1115.0px;top:424.0px;font-size:11.5px;line-height:15px;transform:scaleX(0.9731);color:#000;">13/04/2010</span>
<span class="t" style="left:1220.6px;top:424.0px;font-size:11.5px;line-height:15px;color:#000;">1</span>
<span class="t" style="left:1234.1px;top:424.0px;font-size:11.5px;line-height:15px;transform:scaleX(0.9359);color:#000;">18.0000</span>
<span class="t" style="left:1280.3px;top:424.0px;font-size:11.5px;line-height:15px;transform:scaleX(1.0090);color:#000;">Alfreds Futterkiste</span>
<span class="t" style="left:1381.5px;top:424.0px;font-size:11.5px;line-height:15px;transform:scaleX(0.9562);color:#000;">Obere Str. 57</span>
<span class="t" style="left:1455.0px;top:424.0px;font-size:11.5px;line-height:15px;transform:scaleX(0.9662);color:#000;">Amsterdam</span>
<span class="t" style="left:1519.0px;top:424.0px;font-size:11.5px;line-height:15px;transform:scaleX(0.9592);color:#000;">New York</span>
<span class="t" style="left:1585.3px;top:424.0px;font-size:11.5px;line-height:15px;transform:scaleX(0.9351);color:#000;">12209</span>
<span class="t" style="left:1672.4px;top:424.0px;font-size:11.5px;line-height:15px;transform:scaleX(0.9495);color:#000;">Germany</span>
<div class="r" style="left:793.3px;top:519.3px;width:1102.4px;height:19.7px;background:#ebebeb;"></div>
<svg class="r" style="left:796.4px;top:525px;" width="10" height="9.4" viewBox="0 0 10 9.4"><path d="M1 5 L3.8 8.2 Q5.4 3.6 9.2 0.8" fill="none" stroke="#1f8f1f" stroke-width="2.3"/></svg>
<svg class="r" style="left:817.6px;top:525px;" width="10.4" height="9.4" viewBox="0 0 10.4 9.4"><path d="M1.4 0.8 L9 8.4 M9 0.8 L1.4 8.4" fill="none" stroke="#d20a0a" stroke-width="3"/></svg>
<svg class="r" style="left:839px;top:524.6px;" width="10" height="10" viewBox="0 0 10 10"><path d="M3.5 0 H6.5 V3.5 H10 V6.5 H6.5 V10 H3.5 V6.5 H0 V3.5 H3.5 Z" fill="#9c9c9c"/></svg>
<div class="r" style="left:860.7px;top:528.2px;width:8.3px;height:2.8px;background:#bdbdbd;"></div>
<div class="r" style="left:876.7px;top:519.3px;width:50px;height:19.4px;background:#e1e1e1;border:1px solid #8c8c8c;"></div>
<span class="t" style="left:881.0px;top:522.9px;font-size:11.5px;line-height:15px;transform:scaleX(0.8835);color:#000;">50</span>
<svg class="r" style="left:913.4px;top:527.6px;" width="8" height="4.6" viewBox="0 0 8 4.6"><path d="M0 0 L8 0 L4 4.4 Z" fill="#000"/></svg>
<svg class="r" style="left:932.3px;top:523.8px;" width="14" height="11.6" viewBox="0 0 14 11.6"><rect x="0.2" y="0" width="1.4" height="11.6" fill="#a09ea3"/><path d="M13.2 0.4 L13.2 11.2 L3.4 5.8 Z" fill="#a09ea3"/></svg>
<svg class="r" style="left:954.3px;top:523.8px;" width="11" height="11.6" viewBox="0 0 11 11.6"><path d="M10.4 0.4 L10.4 11.2 L0.6 5.8 Z" fill="#a09ea3"/></svg>
<div class="r" style="left:980px;top:521.3px;width:1px;height:15.4px;border-left:1px dotted #b0b0b0;"></div>
<span class="t" style="left:992.3px;top:522.9px;font-size:11.5px;line-height:15px;transform:scaleX(0.9435);color:#000;word-spacing:2.2px;">Page 1 of 1</span>
<div class="r" style="left:1065.7px;top:521.3px;width:1px;height:15.4px;border-left:1px dotted #b0b0b0;"></div>
<svg class="r" style="left:1081.7px;top:523.8px;" width="11" height="11.6" viewBox="0 0 11 11.6"><path d="M0.6 0.4 L0.6 11.2 L10.4 5.8 Z" fill="#a09ea3"/></svg>
<svg class="r" style="left:1101.5px;top:523.8px;" width="14" height="11.6" viewBox="0 0 14 11.6"><path d="M0.6 0.4 L0.6 11.2 L10.4 5.8 Z" fill="#a09ea3"/><rect x="11.6" y="0" width="1.4" height="11.6" fill="#a09ea3"/></svg>
<svg class="r" style="left:1123.4px;top:523.6px;" width="12.4" height="12" viewBox="0 0 12.4 12"><path d="M3.1 3.0 A4.5 4.5 0 1 0 10.4 5.6" fill="none" stroke="#a09ea3" stroke-width="1.7"/><path d="M6.8 1.6 L11.8 1.4 L11.6 6.6 Z" fill="#a09ea3"/></svg>
<span class="t" style="left:1868.6px;top:522.8px;font-size:11.5px;line-height:15px;transform:scaleX(0.9176);color:#8e8e8e;">1 of 2</span>
<svg class="r" style="left:799px;top:558px;" width="11" height="10.8" viewBox="0 0 11 10.8"><path d="M0.2 0.2 L10.6 0.2 L5.4 10.6 Z" fill="#8e8e8e"/></svg>
<span class="t" style="left:816.0px;top:556.3px;font-size:11.5px;line-height:15px;transform:scaleX(0.9374);color:#8a8a8a;">Order Details</span>
<svg class="r" style="left:1801.5px;top:556.3px;" width="11" height="13" viewBox="0 0 11 13"><rect x="0.6" y="0.4" width="1.3" height="12.4" fill="#8c8c8c"/><path d="M1.8 0.8 L10.4 0.8 L10.4 6.8 L1.8 8.4 Z" fill="#8c8c8c"/></svg>
<svg class="r" style="left:1816.6px;top:559.3px;" width="16.6" height="9" viewBox="0 0 16.6 9"><rect x="0.5" y="0.5" width="15.6" height="8" fill="none" stroke="#8c8c8c" stroke-width="1"/><rect x="2" y="2" width="1.2" height="1.4" fill="#8c8c8c"/><rect x="4.2" y="2" width="1.2" height="1.4" fill="#8c8c8c"/><rect x="6.4" y="2" width="1.2" height="1.4" fill="#8c8c8c"/><rect x="8.6" y="2" width="1.2" height="1.4" fill="#8c8c8c"/><rect x="10.8" y="2" width="1.2" height="1.4" fill="#8c8c8c"/><rect x="13" y="2" width="1.2" height="1.4" fill="#8c8c8c"/><rect x="2" y="4.4" width="1.2" height="1.4" fill="#8c8c8c"/><rect x="4.2" y="4.4" width="1.2" height="1.4" fill="#8c8c8c"/><rect x="6.4" y="4.4" width="1.2" height="1.4" fill="#8c8c8c"/><rect x="8.6" y="4.4" width="1.2" height="1.4" fill="#8c8c8c"/><rect x="10.8" y="4.4" width="1.2" height="1.4" fill="#8c8c8c"/><rect x="13" y="4.4" width="1.2" height="1.4" fill="#8c8c8c"/><rect x="3.4" y="6.4" width="9.6" height="0.9" fill="#8c8c8c"/></svg>
<svg class="r" style="left:1836px;top:555.9px;" width="14.8" height="14.8" viewBox="0 0 14.8 14.8"><path d="M14.69 6.13 L14.69 8.67 L12.94 8.73 L12.26 10.38 L13.45 11.66 L11.66 13.45 L10.38 12.26 L8.73 12.94 L8.67 14.69 L6.13 14.69 L6.07 12.94 L4.42 12.26 L3.14 13.45 L1.35 11.66 L2.54 10.38 L1.86 8.73 L0.11 8.67 L0.11 6.13 L1.86 6.07 L2.54 4.42 L1.35 3.14 L3.14 1.35 L4.42 2.54 L6.07 1.86 L6.13 0.11 L8.67 0.11 L8.73 1.86 L10.38 2.54 L11.66 1.35 L13.45 3.14 L12.26 4.42 L12.94 6.07 Z" fill="#a0a0a0"/><circle cx="7.4" cy="7.4" r="4.7" fill="#fafafa"/></svg>
<svg class="r" style="left:1856.6px;top:556.3px;" width="16" height="15" viewBox="0 0 16 15"><rect x="4" y="0.6" width="8" height="5" fill="none" stroke="#a09ea3" stroke-width="1.2"/><rect x="0.6" y="5.4" width="14.8" height="6" rx="1" fill="#a09ea3"/><rect x="3.6" y="9.6" width="8.8" height="4.6" fill="#fafafa" stroke="#a09ea3" stroke-width="1.1"/><rect x="5" y="11.4" width="6" height="0.8" fill="#a09ea3"/></svg>
<svg class="r" style="left:1877px;top:555.7px;" width="13" height="15.4" viewBox="0 0 13 15.4"><rect x="0.2" y="2" width="12.6" height="1.6" fill="#a09ea3"/><rect x="4" y="0.2" width="5" height="2.2" fill="none" stroke="#a09ea3" stroke-width="1"/><rect x="1.6" y="4" width="9.8" height="11" fill="none" stroke="#a09ea3" stroke-width="1.2"/><rect x="4" y="5.2" width="1.1" height="8.6" fill="#a09ea3"/><rect x="6" y="5.2" width="1.1" height="8.6" fill="#a09ea3"/><rect x="8" y="5.2" width="1.1" height="8.6" fill="#a09ea3"/></svg>
<div class="r" style="left:1895px;top:550.5px;width:1px;height:25px;background:#d8d8d8;"></div>
<div class="r" style="left:793.3px;top:575.3px;width:1102.1px;height:22.3px;background:linear-gradient(#f8f8f8,#eeeeee);border-top:1px solid #d9d9d9;border-bottom:1px solid #cfcfcf;"></div>
<span class="t" style="left:799.0px;top:580.2px;font-size:11px;line-height:15px;transform:scaleX(0.8940);color:#929292;">Order ID</span>
<div class="r" style="left:841px;top:575.3px;width:1px;height:22.3px;background:#cfcfcf;"></div>
<span class="t" style="left:846.5px;top:580.2px;font-size:11px;line-height:15px;transform:scaleX(0.9237);color:#929292;">Product ID</span>
<div class="r" style="left:1029.3px;top:575.3px;width:1px;height:22.3px;background:#cfcfcf;"></div>
<span class="t" style="left:1039.3px;top:580.2px;font-size:11px;line-height:15px;transform:scaleX(0.8683);color:#929292;">Unit Price</span>
<div class="r" style="left:1085px;top:575.3px;width:1px;height:22.3px;background:#cfcfcf;"></div>
<span class="t" style="left:1093.0px;top:580.2px;font-size:11px;line-height:15px;transform:scaleX(0.9228);color:#929292;">Quantity</span>
<div class="r" style="left:1134.8px;top:575.3px;width:1px;height:22.3px;background:#cfcfcf;"></div>
<span class="t" style="left:1853.3px;top:580.2px;font-size:11px;line-height:15px;transform:scaleX(0.9202);color:#929292;">discount</span>
<div class="r" style="left:793.3px;top:575.3px;width:1px;height:22.3px;background:#d9d9d9;"></div>
<div class="r" style="left:1895.4px;top:575.3px;width:1px;height:22.3px;background:#d9d9d9;"></div>
<div class="r" style="left:793.3px;top:597.6px;width:1103.1px;height:22px;background:#ffffff;border:1px solid #d2d2d2;border-top:none;"></div>
<div class="r" style="left:841px;top:597.6px;width:1px;height:21.6px;background:#d2d2d2;"></div>
<div class="r" style="left:1029.3px;top:597.6px;width:1px;height:21.6px;background:#d2d2d2;"></div>
<div class="r" style="left:1085px;top:597.6px;width:1px;height:21.6px;background:#d2d2d2;"></div>
<div class="r" style="left:1134.8px;top:597.6px;width:1px;height:21.6px;background:#d2d2d2;"></div>
<span class="t" style="left:808.3px;top:602.0px;font-size:11.5px;line-height:15px;transform:scaleX(0.9581);color:#000;">11011</span>
<span class="t" style="left:845.0px;top:602.0px;font-size:11.5px;line-height:15px;transform:scaleX(1.0010);color:#000;">Escargots de Bourgogne</span>
<span class="t" style="left:1037.3px;top:602.0px;font-size:11.5px;line-height:15px;transform:scaleX(0.9258);color:#000;">$13.2500</span>
<span class="t" style="left:1120.2px;top:602.0px;font-size:11.5px;line-height:15px;transform:scaleX(0.9226);color:#000;">40</span>
<span class="t" style="left:1853.0px;top:602.0px;font-size:11.5px;line-height:15px;transform:scaleX(0.9142);color:#000;">0.05000</span>
<div class="r" style="left:793.3px;top:619.6px;width:1103.1px;height:22px;background:#f1f4fa;border:1px solid #d2d2d2;border-top:none;"></div>
<div class="r" style="left:841px;top:619.6px;width:1px;height:21.6px;background:#d2d2d2;"></div>
<div class="r" style="left:1029.3px;top:619.6px;width:1px;height:21.6px;background:#d2d2d2;"></div>
<div class="r" style="left:1085px;top:619.6px;width:1px;height:21.6px;background:#d2d2d2;"></div>
<div class="r" style="left:1134.8px;top:619.6px;width:1px;height:21.6px;background:#d2d2d2;"></div>
<span class="t" style="left:808.3px;top:624.0px;font-size:11.5px;line-height:15px;transform:scaleX(0.9581);color:#000;">11011</span>
<span class="t" style="left:845.0px;top:624.0px;font-size:11.5px;line-height:15px;transform:scaleX(0.9793);color:#000;">Flotemysost</span>
<span class="t" style="left:1037.3px;top:624.0px;font-size:11.5px;line-height:15px;transform:scaleX(0.9258);color:#000;">$21.5000</span>
<span class="t" style="left:1120.2px;top:624.0px;font-size:11.5px;line-height:15px;transform:scaleX(0.9226);color:#000;">20</span>
<span class="t" style="left:1853.0px;top:624.0px;font-size:11.5px;line-height:15px;transform:scaleX(0.9142);color:#000;">0.00000</span>
<div class="r" style="left:793.3px;top:718.9px;width:1102.4px;height:19.7px;background:#ebebeb;"></div>
<svg class="r" style="left:796.4px;top:724.6px;" width="10" height="9.4" viewBox="0 0 10 9.4"><path d="M1 5 L3.8 8.2 Q5.4 3.6 9.2 0.8" fill="none" stroke="#1f8f1f" stroke-width="2.3"/></svg>
<svg class="r" style="left:817.6px;top:724.6px;" width="10.4" height="9.4" viewBox="0 0 10.4 9.4"><path d="M1.4 0.8 L9 8.4 M9 0.8 L1.4 8.4" fill="none" stroke="#d20a0a" stroke-width="3"/></svg>
<svg class="r" style="left:839px;top:724.2px;" width="10" height="10" viewBox="0 0 10 10"><path d="M3.5 0 H6.5 V3.5 H10 V6.5 H6.5 V10 H3.5 V6.5 H0 V3.5 H3.5 Z" fill="#9c9c9c"/></svg>
<div class="r" style="left:860.7px;top:727.8px;width:8.3px;height:2.8px;background:#bdbdbd;"></div>
<div class="r" style="left:876.7px;top:718.9px;width:50px;height:19.4px;background:#e1e1e1;border:1px solid #8c8c8c;"></div>
<span class="t" style="left:881.0px;top:722.5px;font-size:11.5px;line-height:15px;transform:scaleX(0.8835);color:#000;">50</span>
<svg class="r" style="left:913.4px;top:727.2px;" width="8" height="4.6" viewBox="0 0 8 4.6"><path d="M0 0 L8 0 L4 4.4 Z" fill="#000"/></svg>
<svg class="r" style="left:932.3px;top:723.4px;" width="14" height="11.6" viewBox="0 0 14 11.6"><rect x="0.2" y="0" width="1.4" height="11.6" fill="#a09ea3"/><path d="M13.2 0.4 L13.2 11.2 L3.4 5.8 Z" fill="#a09ea3"/></svg>
<svg class="r" style="left:954.3px;top:723.4px;" width="11" height="11.6" viewBox="0 0 11 11.6"><path d="M10.4 0.4 L10.4 11.2 L0.6 5.8 Z" fill="#a09ea3"/></svg>
<div class="r" style="left:980px;top:720.9px;width:1px;height:15.4px;border-left:1px dotted #b0b0b0;"></div>
<span class="t" style="left:992.3px;top:722.5px;font-size:11.5px;line-height:15px;transform:scaleX(0.9435);color:#000;word-spacing:2.2px;">Page 1 of 1</span>
<div class="r" style="left:1065.7px;top:720.9px;width:1px;height:15.4px;border-left:1px dotted #b0b0b0;"></div>
<svg class="r" style="left:1081.7px;top:723.4px;" width="11" height="11.6" viewBox="0 0 11 11.6"><path d="M0.6 0.4 L0.6 11.2 L10.4 5.8 Z" fill="#a09ea3"/></svg>
<svg class="r" style="left:1101.5px;top:723.4px;" width="14" height="11.6" viewBox="0 0 14 11.6"><path d="M0.6 0.4 L0.6 11.2 L10.4 5.8 Z" fill="#a09ea3"/><rect x="11.6" y="0" width="1.4" height="11.6" fill="#a09ea3"/></svg>
<svg class="r" style="left:1123.4px;top:723.2px;" width="12.4" height="12" viewBox="0 0 12.4 12"><path d="M3.1 3.0 A4.5 4.5 0 1 0 10.4 5.6" fill="none" stroke="#a09ea3" stroke-width="1.7"/><path d="M6.8 1.6 L11.8 1.4 L11.6 6.6 Z" fill="#a09ea3"/></svg>
<span class="t" style="left:1868.6px;top:722.4px;font-size:11.5px;line-height:15px;transform:scaleX(0.9176);color:#8e8e8e;">1 of 2</span>
<div class="r" style="left:493px;top:979.3px;width:1427px;height:40.5px;background:#323232;"></div>
<div class="r" style="left:493px;top:1019.5px;width:1427px;height:1.2px;background:#8c8c8c;"></div>
<div class="r" style="left:493px;top:1020.7px;width:1427px;height:59.3px;background:#35302e;"></div>
<span class="t" style="left:1162.4px;top:979.2px;font-size:12.01px;line-height:16px;font-weight:bold;transform:scaleX(0.9870);color:#fff;">Selected 1 of 89</span>
<svg class="r" style="left:902.6px;top:990.4px;" width="20" height="20" viewBox="0 0 20 20"><path d="M7.8 0 H12.2 V7.8 H20 V12.2 H12.2 V20 H7.8 V12.2 H0 V7.8 H7.8 Z" fill="#fff"/></svg>
<svg class="r" style="left:936px;top:990px;" width="18" height="20" viewBox="0 0 18 20"><rect x="0" y="3" width="18" height="2.6" fill="#fff"/><rect x="5.6" y="0.6" width="6.8" height="3" fill="#fff"/><path d="M1.6 7 L16.4 7 L16.4 20 L1.6 20 Z" fill="#fff"/><rect x="5.4" y="8.6" width="2" height="9.6" fill="#323232"/><rect x="10.6" y="8.6" width="2" height="9.6" fill="#323232"/></svg>
<svg class="r" style="left:966.4px;top:990.4px;" width="21.6" height="20" viewBox="0 0 21.6 20"><path d="M5.6 8.6 A7.6 7.6 0 1 1 7.4 16" fill="none" stroke="#fff" stroke-width="2.2"/><path d="M0.6 6.4 L9.6 6.4 L5 13 Z" fill="#fff"/></svg>
<svg class="r" style="left:1000px;top:989.6px;" width="19.4" height="21.6" viewBox="0 0 19.4 21.6"><rect x="0.4" y="0.4" width="2.2" height="20.8" fill="#d4d4d4"/><path d="M17.2 1.6 L7.2 10.8 L17.2 20" fill="none" stroke="#d4d4d4" stroke-width="4.4"/></svg>
<svg class="r" style="left:1031.4px;top:989.6px;" width="18.4" height="21.6" viewBox="0 0 18.4 21.6"><path d="M15.6 1.6 L5 10.8 L15.6 20" fill="none" stroke="#d4d4d4" stroke-width="4.4"/></svg>
<div class="r" style="left:1059px;top:998.2px;width:297.4px;height:11px;background:#fbfbfb;border-radius:4px;"></div>
<div class="r" style="left:1057px;top:996.8px;width:16px;height:13.6px;background:#d2d2d2;border-radius:4px;border:1px solid #bdbdbd;"></div>
<svg class="r" style="left:1364.2px;top:989.6px;" width="18.4" height="21.6" viewBox="0 0 18.4 21.6"><path d="M2.8 1.6 L13.4 10.8 L2.8 20" fill="none" stroke="#fff" stroke-width="4.2"/></svg>
<svg class="r" style="left:1396px;top:989.6px;" width="19.8" height="21.6" viewBox="0 0 19.8 21.6"><path d="M2.2 1.6 L12.2 10.8 L2.2 20" fill="none" stroke="#fff" stroke-width="4.2"/><rect x="16.8" y="0.4" width="2.2" height="20.8" fill="#fff"/></svg>
<svg class="r" style="left:1428px;top:990.6px;" width="19" height="20" viewBox="0 0 19 20"><path d="M0.4 0.6 L12.6 0.6 L12.6 3.2 L7.8 3.2 L7.8 15 L5.2 15 L5.2 3.2 L0.4 3.2 Z" fill="#fff"/><path d="M8.6 19.6 L9.4 16 L15.4 8.4 L18 10.4 L12 18 Z" fill="#fff" stroke="#323232" stroke-width="0.7"/></svg>
<svg class="r" style="left:1460px;top:992.4px;" width="17.6" height="15" viewBox="0 0 17.6 15"><path d="M1.2 8.6 L6 13 L16.4 1.2" fill="none" stroke="#fff" stroke-width="2.3"/></svg>
<svg class="r" style="left:1490.4px;top:991px;" width="20.4" height="18.6" viewBox="0 0 20.4 18.6"><path d="M4 7.4 A7.4 7.4 0 1 1 16.6 14.6" fill="none" stroke="#fff" stroke-width="2.2" transform="rotate(-20 10 9)"/><path d="M0.6 3.6 L8.4 5 L2.6 11 Z" fill="#fff"/></svg>
<svg class="r" style="left:742.4px;top:1031.6px;overflow:visible;" width="28.4" height="28.4" viewBox="0 0 28.4 28.4"><path d="M0.4 2.6 h10.8 v2.6 h17 v3.8 h-27.8 z" fill="#fff"/><rect x="0.4" y="12" width="27.8" height="14" fill="#fff"/></svg>
<span class="t" style="left:729.2px;top:1061.1px;font-size:12.01px;line-height:16px;font-weight:bold;transform:scaleX(0.9441);color:#fff;">Collection</span>
<svg class="r" style="left:817.6px;top:1031.6px;overflow:visible;" width="28.4" height="28.4" viewBox="0 0 28.4 28.4"><rect x="0" y="5.4" width="28.4" height="18" rx="1" fill="#fff"/><rect x="3" y="12" width="10.4" height="1.6" fill="#35302e"/><rect x="3" y="16" width="10.4" height="1.6" fill="#35302e"/><circle cx="20.8" cy="11.8" r="2.5" fill="#35302e"/><path d="M17 19 q0 -4 3.8 -4 q3.8 0 3.8 4 z" fill="#35302e"/></svg>
<span class="t" style="left:817.5px;top:1061.1px;font-size:12.01px;line-height:16px;font-weight:bold;transform:scaleX(0.9929);color:#fff;">Page</span>
<svg class="r" style="left:892.8px;top:1031.6px;overflow:visible;" width="28.4" height="28.4" viewBox="0 0 28.4 28.4"><rect x="0.8" y="0" width="23.4" height="6.4" fill="#fff"/><rect x="0.8" y="8" width="23.4" height="4.6" fill="#fff"/><rect x="1.6" y="15" width="21.8" height="5.8" fill="none" stroke="#fff" stroke-width="1.6"/><rect x="0.8" y="22.8" width="23.4" height="5.2" fill="#fff"/><path d="M20.2 17.4 L20.2 27.4 L22.6 25.2 L24.4 28.8 L26 28 L24.2 24.6 L27.4 24.4 Z" fill="#fff" stroke="#35302e" stroke-width="0.8"/></svg>
<span class="t" style="left:883.2px;top:1061.1px;font-size:12.01px;line-height:16px;font-weight:bold;transform:scaleX(0.9490);color:#fff;">Sections</span>
<svg class="r" style="left:967px;top:1031.6px;overflow:visible;" width="28.4" height="28.4" viewBox="0 0 28.4 28.4"><path d="M1.6 0.6 L1.6 26.4 L28 26.4" fill="none" stroke="#fff" stroke-width="3"/><path d="M6 22.6 L6 16 L12.4 9.4 L17 13.4 L26.4 2.4 L26.4 22.6 Z" fill="#fff"/><path d="M7 13.6 L12.4 9 L16.8 12.6 L21 8.6 L26 11.4" fill="none" stroke="#35302e" stroke-width="1.7"/></svg>
<span class="t" style="left:957.7px;top:1061.1px;font-size:12.01px;line-height:16px;font-weight:bold;transform:scaleX(0.9782);color:#fff;">Gadgets</span>
<svg class="r" style="left:1042.4px;top:1031.6px;overflow:visible;" width="28.4" height="28.4" viewBox="0 0 28.4 28.4"><rect x="1" y="1.4" width="19.6" height="6" rx="1" fill="none" stroke="#fff" stroke-width="1.5"/><rect x="22.4" y="0.8" width="5.6" height="7.2" rx="1" fill="#fff"/><path d="M1.6 10.4 L19.6 10.4 L19.6 27 L1.6 27 Z" fill="#fff"/><rect x="4" y="13.6" width="13.2" height="1.7" fill="#35302e"/><rect x="4" y="18" width="13.2" height="1.7" fill="#35302e"/><rect x="4" y="22.4" width="13.2" height="1.7" fill="#35302e"/></svg>
<span class="t" style="left:1043.6px;top:1061.1px;font-size:12.01px;line-height:16px;font-weight:bold;transform:scaleX(0.9278);color:#fff;">Field</span>
<svg class="r" style="left:1117.5px;top:1031.6px;overflow:visible;" width="28.4" height="28.4" viewBox="0 0 28.4 28.4"><path d="M8.6 0.4 L8.6 28 M19.8 0.4 L19.8 28 M0.2 8.8 L28.2 8.8 M0.2 20 L28.2 20" fill="none" stroke="#fff" stroke-width="4"/></svg>
<span class="t" style="left:1108.7px;top:1061.1px;font-size:12.01px;line-height:16px;font-weight:bold;transform:scaleX(0.9706);color:#fff;">Dividers</span>
<svg class="r" style="left:1192.2px;top:1031.6px;overflow:visible;" width="28.4" height="28.4" viewBox="0 0 28.4 28.4"><path d="M0.6 0.6 L19.4 0.6 L19.4 4.4 L12 4.4 L12 22 L8 22 L8 4.4 L0.6 4.4 Z" fill="#fff"/><path d="M12.4 27.8 L13.6 22.6 L22.8 10.8 L26.6 13.8 L17.4 25.6 Z" fill="#fff" stroke="#35302e" stroke-width="0.9"/><path d="M23.4 10 L24.6 8.4 Q25.4 7.6 26.4 8.2 L28.4 9.8 Q29.2 10.6 28.6 11.6 L27.4 13.2 Z" fill="#fff"/></svg>
<span class="t" style="left:1184.7px;top:1061.1px;font-size:12.01px;line-height:16px;font-weight:bold;transform:scaleX(0.9733);color:#fff;">Caption</span>
<svg class="r" style="left:1267.5px;top:1031.6px;overflow:visible;" width="28.4" height="28.4" viewBox="0 0 28.4 28.4"><path d="M1.4 0.2 L26.6 0.2 L26.6 6 L17.4 6 L17.4 28 L10.6 28 L10.6 6 L1.4 6 Z" fill="#fff"/></svg>
<span class="t" style="left:1269.0px;top:1061.1px;font-size:12.01px;line-height:16px;font-weight:bold;transform:scaleX(1.0714);color:#fff;">Text</span>
<svg class="r" style="left:1342.3px;top:1031.6px;overflow:visible;" width="28.4" height="28.4" viewBox="0 0 28.4 28.4"><g transform="rotate(45 14 14)"><rect x="11.2" y="-3.4" width="5.6" height="7" rx="2.4" fill="#fff"/><rect x="8.8" y="3.2" width="10.4" height="3.6" rx="0.8" fill="#fff"/><path d="M11 7.4 L17 7.4 L17 22 L14 27.6 L11 22 Z" fill="none" stroke="#e6e6e6" stroke-width="1.1"/><rect x="11.6" y="6.6" width="4.8" height="3.2" fill="#fff"/></g></svg>
<span class="t" style="left:1335.7px;top:1061.1px;font-size:12.01px;line-height:16px;font-weight:bold;transform:scaleX(1.0220);color:#fff;">Format</span>
<svg class="r" style="left:1417.6px;top:1031.6px;overflow:visible;" width="28.4" height="28.4" viewBox="0 0 28.4 28.4"><rect x="0" y="0.6" width="28.2" height="2.3" fill="#fff"/><rect x="5.4" y="6.6" width="17.4" height="2.3" fill="#fff"/><rect x="0" y="12.6" width="28.2" height="2.3" fill="#fff"/><rect x="5.4" y="18.8" width="17.4" height="2.3" fill="#fff"/><rect x="0" y="25" width="28.2" height="2.3" fill="#fff"/></svg>
<span class="t" style="left:1417.7px;top:1061.1px;font-size:12.01px;line-height:16px;font-weight:bold;transform:scaleX(0.9395);color:#fff;">Align</span>
<svg class="r" style="left:1492.8px;top:1031.6px;overflow:visible;" width="28.4" height="28.4" viewBox="0 0 28.4 28.4"><g transform="translate(0 0.8)"><g transform="rotate(45 16 14)"><path d="M13.8 0.6 L13.8 5.4 L16 6.8 L18.2 5.4 L18.2 0.6 Q22 2 22 6.4 Q22 9.6 18.6 11.2 L18.6 27 Q18.6 29 16 29 Q13.4 29 13.4 27 L13.4 11.2 Q10 9.6 10 6.4 Q10 2 13.8 0.6 Z" fill="#fff"/><circle cx="16" cy="26" r="1.1" fill="#35302e"/></g>
<g transform="rotate(-45 16 14)"><rect x="12" y="-3" width="8" height="19" rx="3" fill="#35302e"/><rect x="13" y="-2.4" width="6" height="15.6" rx="2.4" fill="#fff"/><rect x="14.6" y="0.4" width="0.9" height="10" fill="#35302e"/><rect x="16.5" y="0.4" width="0.9" height="10" fill="#35302e"/><rect x="14.4" y="14.6" width="3.2" height="2.4" fill="#fff"/><path d="M15 17.6 L17 17.6 L17 26 L16 28.6 L15 26 Z" fill="#fff"/></g></g></svg>
<span class="t" style="left:1479.0px;top:1061.1px;font-size:12.01px;line-height:16px;font-weight:bold;transform:scaleX(0.9757);color:#fff;">Advanced</span>
<svg class="r" style="left:1567.2px;top:1031.6px;overflow:visible;" width="28.4" height="28.4" viewBox="0 0 28.4 28.4"><path d="M15.6 0.4 C24.4 -0.6 29.6 4.6 28 10 C26.6 14.6 21 14 20.4 17.6 C19.8 21.4 23 22 20.6 25.4 C17.6 29.6 7.4 28.8 2.6 22.6 C-2.4 16 1.6 2.4 15.6 0.4 Z" fill="#fff"/><circle cx="7" cy="17" r="2" fill="#35302e"/><circle cx="9.4" cy="10.2" r="2" fill="#35302e"/><circle cx="15.6" cy="6" r="2" fill="#35302e"/><circle cx="22.4" cy="7" r="2" fill="#35302e"/></svg>
<span class="t" style="left:1558.8px;top:1061.1px;font-size:12.01px;line-height:16px;font-weight:bold;transform:scaleX(0.9959);color:#fff;">Themes</span>
<svg class="r" style="left:1642.4px;top:1031.6px;overflow:visible;" width="28.4" height="28.4" viewBox="0 0 28.4 28.4"><rect x="5" y="4" width="8" height="5.6" fill="#fff"/><rect x="14.6" y="4" width="8" height="5.6" fill="#fff"/><rect x="0.2" y="11.4" width="8" height="5.6" fill="#fff"/><rect x="9.8" y="11.4" width="8" height="5.6" fill="#fff"/><rect x="19.4" y="11.4" width="8" height="5.6" fill="#fff"/><rect x="9.8" y="18.8" width="8" height="5.6" fill="#fff"/><rect x="19.4" y="18.8" width="8" height="5.6" fill="#fff"/></svg>
<span class="t" style="left:1625.9px;top:1061.1px;font-size:12.01px;line-height:16px;font-weight:bold;transform:scaleX(0.9584);color:#fff;">Extensions</span>
<svg class="r" style="left:1798.5px;top:3px;" width="11" height="14" viewBox="0 0 11 14"><rect x="0" y="7" width="10.4" height="1" fill="#1a1a1a"/></svg>
<svg class="r" style="left:1844px;top:5px;" width="11" height="11" viewBox="0 0 11 11"><rect x="0.5" y="2.5" width="7.4" height="7.4" fill="none" stroke="#1a1a1a" stroke-width="1"/><path d="M2.6 2.4 L2.6 0.5 L9.8 0.5 L9.8 7.7 L8 7.7" fill="none" stroke="#1a1a1a" stroke-width="1"/></svg>
<svg class="r" style="left:1890px;top:5.2px;" width="10.2" height="10.2" viewBox="0 0 10.2 10.2"><path d="M0.3 0.3 L9.9 9.9 M9.9 0.3 L0.3 9.9" stroke="#1a1a1a" stroke-width="1.1"/></svg>
<svg class="r" style="left:2px;top:3px;" width="16.2" height="15.8" viewBox="0 0 16.2 15.8"><defs><linearGradient id="eg" x1="0" y1="0" x2="0" y2="1"><stop offset="0" stop-color="#9c9c9c"/><stop offset="0.75" stop-color="#ececec"/></linearGradient></defs><rect x="0" y="0" width="16.2" height="15.8" fill="url(#eg)"/><rect x="0" y="0" width="16.2" height="15.8" fill="none" stroke="#555" stroke-width="0.6"/><path d="M2 13.4 L2 8.4 Q1.6 5 4.4 4 Q6 3.2 8 3.8 Q9.6 3 11.2 3.6 Q13.4 4.4 13.6 7.4 L14.2 10.4 L14.6 13.4 L13.4 13.4 L12.6 9.8 L12.4 13.4 L10.4 13.4 L10.2 11 L6.2 11 L6 13.4 L4.2 13.4 L4 11 L3.4 13.4 Z" fill="#0a0a0a"/><rect x="0" y="13.2" width="16.2" height="2.6" fill="#050505"/></svg>
<svg class="r" style="left:440px;top:470px;overflow:visible;" width="140" height="170" viewBox="0 0 140 170"><g transform="translate(-440,-470)" style="filter:drop-shadow(1.5px 2px 1.6px rgba(0,0,0,0.35));"><path d="M490.7 570.8 L490.7 495.6 A8.65 8.65 0 0 1 508 495.6 L508 528.5 A9.5 8.6 0 0 1 527 528.5 L527 535 A7.85 7.5 0 0 1 542.7 535 L542.7 538 A8.25 7.8 0 0 1 559.2 538 L559.2 580 C559.2 606 541 621 518.7 621 C499 621 487.5 606.5 471.5 590.5 L458.6 577 C451.5 569.5 453.5 557.5 462.5 554.2 C468.5 552 474 556.5 490.7 570.8 Z" fill="#f8f8f8" stroke="#000" stroke-width="5.6" stroke-linejoin="round"/><path d="M508 528 L508 553.5 M527 534 L527 553.5 M542.7 537 L542.7 553.5" fill="none" stroke="#000" stroke-width="5.6"/></g></svg>
</body></html>
